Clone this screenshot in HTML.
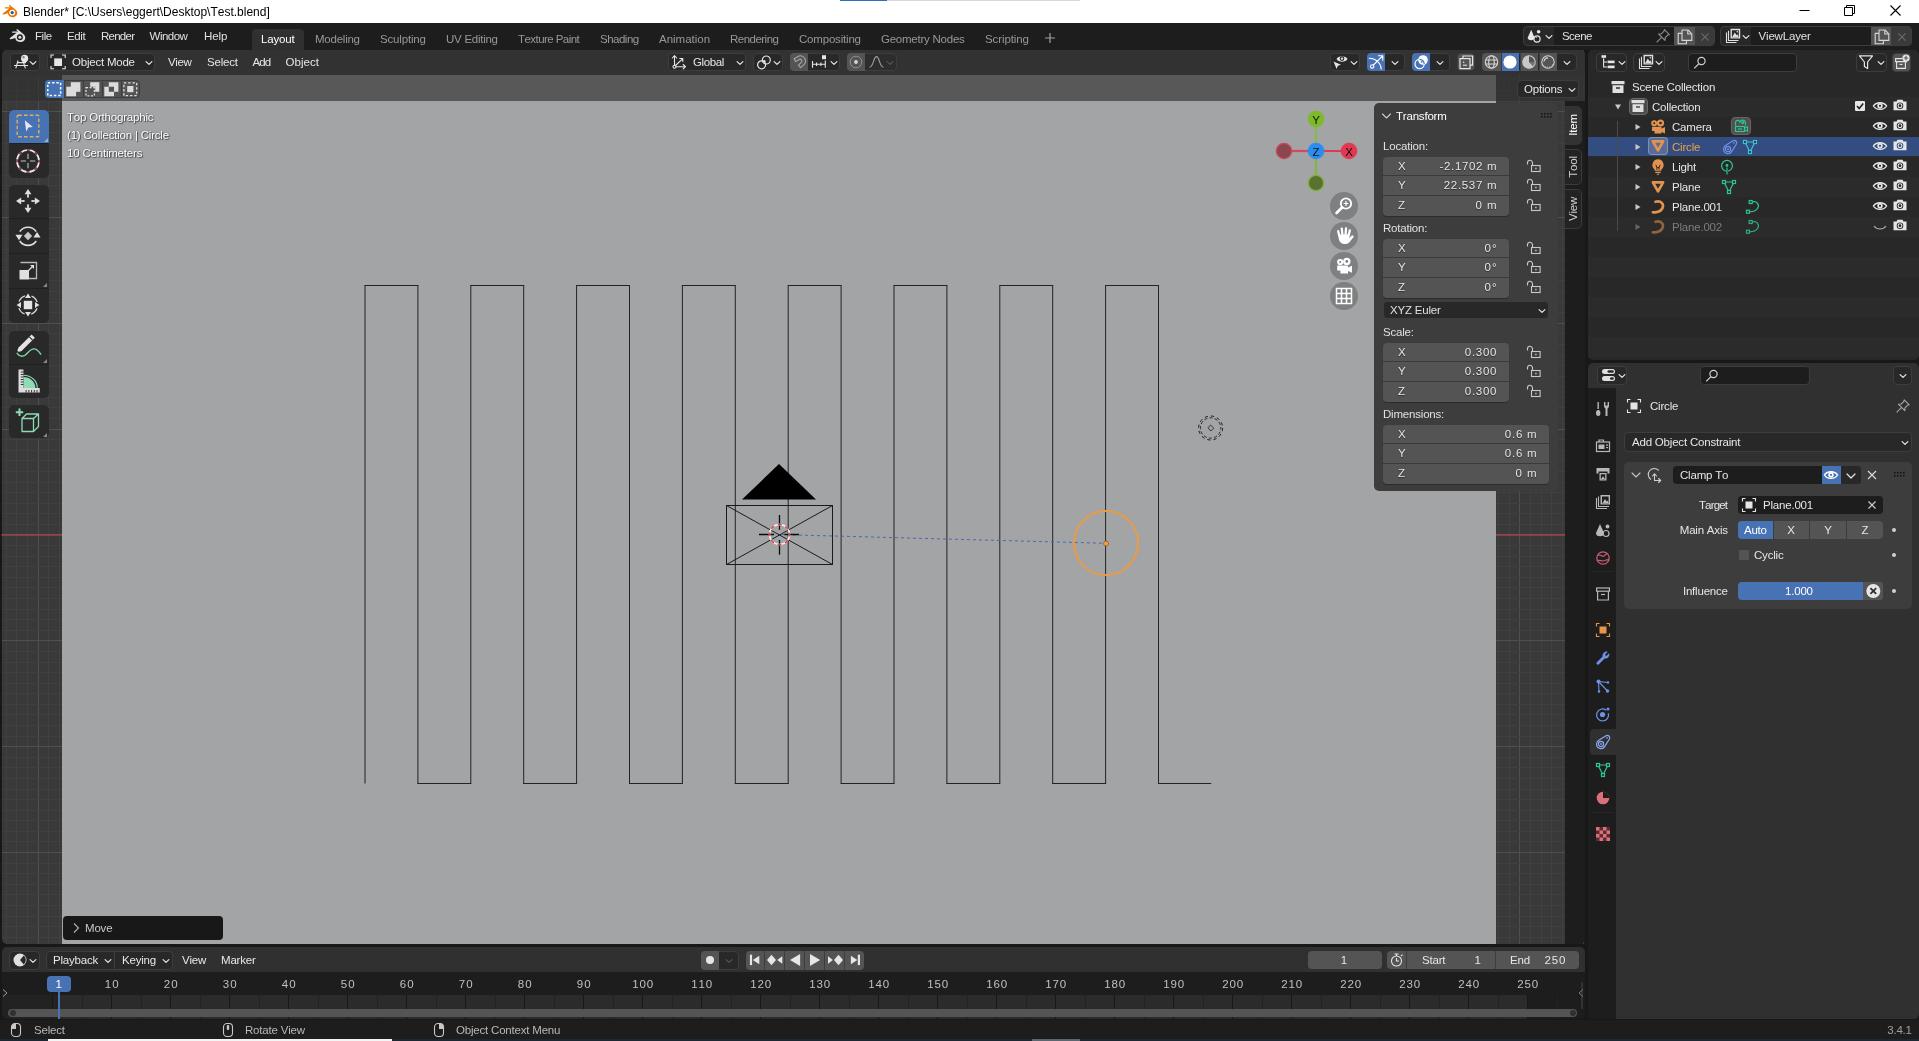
<!DOCTYPE html>
<html><head><meta charset="utf-8"><title>Blender</title>
<style>
html,body{margin:0;padding:0;}
body{width:1919px;height:1041px;overflow:hidden;background:#181818;position:relative;font-family:"Liberation Sans",sans-serif;}
.a{position:absolute;box-sizing:border-box;}
.t{white-space:nowrap;font-kerning:none;}
svg{overflow:visible;}
</style></head><body>
<div id="root" class="a" style="left:0;top:0;width:1919px;height:1041px;will-change:transform;">
<div class="a" style="left:0px;top:0px;width:1919px;height:23px;background:#ffffff;"></div>
<svg class="a" style="left:1.2px;top:3px;" width="17" height="16"><g transform="scale(0.85)"><path d="M2.2,12.3 L9.6,6.4 H5.2 C4.2,6.4 4.2,5 5.2,5 H11.2 L9.6,3.7 C8.8,3 9.8,1.9 10.7,2.6 L17.6,8.2 C19.4,9.8 19.7,12.4 18.4,14.4 C16.6,17 12.6,17.6 10,15.6 C8.9,14.7 8.2,13.5 8.2,12.2 L3.2,13.6 C2.2,14 1.4,13 2.2,12.3 Z" fill="#ea7600"/><circle cx="13.2" cy="11.3" r="3.4" fill="#fff"/><circle cx="13.2" cy="11.3" r="1.9" fill="#265787"/></g></svg>
<div class="a t" style="top:3.5px;line-height:16px;font-size:12px;letter-spacing:0px;color:#000;left:23px;">Blender* [C:\Users\eggert\Desktop\Test.blend]</div>
<div class="a" style="left:840px;top:0px;width:47px;height:1px;background:#2a6fc0;"></div>
<div class="a" style="left:887px;top:0px;width:193px;height:1px;background:#d8d8d8;"></div>
<svg class="a" style="left:1799px;top:4px;" width="12" height="12"><path d="M0.5,6.5 H10.5" stroke="#000" stroke-width="1"/></svg>
<svg class="a" style="left:1844px;top:5px;" width="12" height="12"><path d="M0.5,2.5 H8.5 V10.5 H0.5 Z M2.5,2.5 V0.5 H10.5 V8.5 H8.5" fill="none" stroke="#000" stroke-width="1"/></svg>
<svg class="a" style="left:1890px;top:5px;" width="12" height="12"><path d="M0.5,0.5 L10.5,10.5 M10.5,0.5 L0.5,10.5" stroke="#000" stroke-width="1.1"/></svg>
<div class="a" style="left:0px;top:23px;width:1919px;height:27px;background:#1d1d1d;"></div>
<svg class="a" style="left:8.3px;top:27px;" width="20" height="18"><g transform="translate(0,0) scale(0.9)"><path d="M2.2,12.3 L9.6,6.4 H5.2 C4.2,6.4 4.2,5 5.2,5 H11.2 L9.6,3.7 C8.8,3 9.8,1.9 10.7,2.6 L17.6,8.2 C19.4,9.8 19.7,12.4 18.4,14.4 C16.6,17 12.6,17.6 10,15.6 C8.9,14.7 8.2,13.5 8.2,12.2 L3.2,13.6 C2.2,14 1.4,13 2.2,12.3 Z" fill="#e0e0e0"/><circle cx="13.2" cy="11.3" r="3.3" fill="#1d1d1d"/><circle cx="13.2" cy="11.3" r="1.7" fill="#e0e0e0"/></g></svg>
<div class="a t" style="top:28.0px;line-height:16px;font-size:11.5px;letter-spacing:-0.443px;color:#e0e0e0;left:35px;">File</div>
<div class="a t" style="top:28.0px;line-height:16px;font-size:11.5px;letter-spacing:-0.405px;color:#e0e0e0;left:67px;">Edit</div>
<div class="a t" style="top:28.0px;line-height:16px;font-size:11.5px;letter-spacing:-0.744px;color:#e0e0e0;left:101px;">Render</div>
<div class="a t" style="top:28.0px;line-height:16px;font-size:11.5px;letter-spacing:-0.52px;color:#e0e0e0;left:149.6px;">Window</div>
<div class="a t" style="top:28.0px;line-height:16px;font-size:11.5px;letter-spacing:-0.117px;color:#e0e0e0;left:204px;">Help</div>
<div class="a" style="left:252px;top:29px;width:52px;height:21px;background:#303030;border-radius:4px;border-bottom-left-radius:0;border-bottom-right-radius:0;"></div>
<div class="a t" style="top:31.0px;line-height:16px;font-size:11.5px;letter-spacing:-0.146px;color:#ffffff;left:261px;">Layout</div>
<div class="a t" style="top:31.0px;line-height:16px;font-size:11.5px;letter-spacing:-0.238px;color:#989898;left:315px;">Modeling</div>
<div class="a t" style="top:31.0px;line-height:16px;font-size:11.5px;letter-spacing:-0.164px;color:#989898;left:380px;">Sculpting</div>
<div class="a t" style="top:31.0px;line-height:16px;font-size:11.5px;letter-spacing:-0.259px;color:#989898;left:446px;">UV Editing</div>
<div class="a t" style="top:31.0px;line-height:16px;font-size:11.5px;letter-spacing:-0.558px;color:#989898;left:518px;">Texture Paint</div>
<div class="a t" style="top:31.0px;line-height:16px;font-size:11.5px;letter-spacing:-0.501px;color:#989898;left:600px;">Shading</div>
<div class="a t" style="top:31.0px;line-height:16px;font-size:11.5px;letter-spacing:-0.005px;color:#989898;left:659px;">Animation</div>
<div class="a t" style="top:31.0px;line-height:16px;font-size:11.5px;letter-spacing:-0.52px;color:#989898;left:730px;">Rendering</div>
<div class="a t" style="top:31.0px;line-height:16px;font-size:11.5px;letter-spacing:-0.192px;color:#989898;left:799px;">Compositing</div>
<div class="a t" style="top:31.0px;line-height:16px;font-size:11.5px;letter-spacing:-0.24px;color:#989898;left:881px;">Geometry Nodes</div>
<div class="a t" style="top:31.0px;line-height:16px;font-size:11.5px;letter-spacing:-0.105px;color:#989898;left:985px;">Scripting</div>
<svg class="a" style="left:1043.6px;top:32.3px;" width="12" height="12"><path d="M6,1 V11 M1,6 H11" stroke="#a0a0a0" stroke-width="1.2"/></svg>
<div class="a" style="left:1523px;top:26px;width:192px;height:20px;background:#282828;border-radius:4px;border:1px solid #3d3d3d;"></div>
<div class="a" style="left:1554px;top:27px;width:120px;height:18px;background:#1d1d1d;"></div>
<div class="a" style="left:1674px;top:27px;width:21px;height:18px;background:#545454;"></div>
<div class="a" style="left:1695px;top:27px;width:19px;height:18px;background:#3a3a3a;border-radius:0 3px 3px 0;"></div>
<div class="a t" style="top:28.0px;line-height:16px;font-size:11.5px;letter-spacing:-0.552px;color:#e0e0e0;left:1562px;">Scene</div>
<div class="a" style="left:1720px;top:26px;width:192px;height:20px;background:#282828;border-radius:4px;border:1px solid #3d3d3d;"></div>
<div class="a" style="left:1751px;top:27px;width:120px;height:18px;background:#1d1d1d;"></div>
<div class="a" style="left:1871px;top:27px;width:20px;height:18px;background:#545454;"></div>
<div class="a" style="left:1891px;top:27px;width:20px;height:18px;background:#3a3a3a;border-radius:0 3px 3px 0;"></div>
<div class="a t" style="top:28.0px;line-height:16px;font-size:11.5px;letter-spacing:-0.174px;color:#e0e0e0;left:1758.5px;">ViewLayer</div>
<div class="a" style="left:1.5px;top:50px;width:1583.5px;height:894px;background:#393939;border-radius:5px;"></div>
<svg class="a" style="left:0px;top:0px;shape-rendering:crispEdges;stroke-width:1;fill:none;" width="1919" height="1041"><path d="M6.5,50 V944" stroke="#404040"/><path d="M16.5,50 V944" stroke="#404040"/><path d="M27.5,50 V944" stroke="#404040"/><path d="M38.5,50 V944" stroke="#4f4f4f"/><path d="M48.5,50 V944" stroke="#404040"/><path d="M59.5,50 V944" stroke="#404040"/><path d="M1498.5,50 V944" stroke="#404040"/><path d="M1509.5,50 V944" stroke="#404040"/><path d="M1519.5,50 V944" stroke="#4f4f4f"/><path d="M1530.5,50 V944" stroke="#404040"/><path d="M1541.5,50 V944" stroke="#404040"/><path d="M1551.5,50 V944" stroke="#404040"/><path d="M1562.5,50 V944" stroke="#404040"/><path d="M1572.5,50 V944" stroke="#404040"/><path d="M1583.5,50 V944" stroke="#404040"/><path d="M1.5,58.5 H1585" stroke="#404040"/><path d="M1.5,69.5 H1585" stroke="#404040"/><path d="M1.5,79.5 H1585" stroke="#404040"/><path d="M1.5,90.5 H1585" stroke="#404040"/><path d="M1.5,101.5 H1585" stroke="#404040"/><path d="M1.5,111.5 H1585" stroke="#4f4f4f"/><path d="M1.5,122.5 H1585" stroke="#404040"/><path d="M1.5,132.5 H1585" stroke="#404040"/><path d="M1.5,143.5 H1585" stroke="#404040"/><path d="M1.5,153.5 H1585" stroke="#404040"/><path d="M1.5,164.5 H1585" stroke="#404040"/><path d="M1.5,175.5 H1585" stroke="#404040"/><path d="M1.5,185.5 H1585" stroke="#404040"/><path d="M1.5,196.5 H1585" stroke="#404040"/><path d="M1.5,206.5 H1585" stroke="#404040"/><path d="M1.5,217.5 H1585" stroke="#4f4f4f"/><path d="M1.5,228.5 H1585" stroke="#404040"/><path d="M1.5,238.5 H1585" stroke="#404040"/><path d="M1.5,249.5 H1585" stroke="#404040"/><path d="M1.5,259.5 H1585" stroke="#404040"/><path d="M1.5,270.5 H1585" stroke="#404040"/><path d="M1.5,280.5 H1585" stroke="#404040"/><path d="M1.5,291.5 H1585" stroke="#404040"/><path d="M1.5,302.5 H1585" stroke="#404040"/><path d="M1.5,312.5 H1585" stroke="#404040"/><path d="M1.5,323.5 H1585" stroke="#4f4f4f"/><path d="M1.5,333.5 H1585" stroke="#404040"/><path d="M1.5,344.5 H1585" stroke="#404040"/><path d="M1.5,355.5 H1585" stroke="#404040"/><path d="M1.5,365.5 H1585" stroke="#404040"/><path d="M1.5,376.5 H1585" stroke="#404040"/><path d="M1.5,386.5 H1585" stroke="#404040"/><path d="M1.5,397.5 H1585" stroke="#404040"/><path d="M1.5,407.5 H1585" stroke="#404040"/><path d="M1.5,418.5 H1585" stroke="#404040"/><path d="M1.5,429.5 H1585" stroke="#4f4f4f"/><path d="M1.5,439.5 H1585" stroke="#404040"/><path d="M1.5,450.5 H1585" stroke="#404040"/><path d="M1.5,460.5 H1585" stroke="#404040"/><path d="M1.5,471.5 H1585" stroke="#404040"/><path d="M1.5,482.5 H1585" stroke="#404040"/><path d="M1.5,492.5 H1585" stroke="#404040"/><path d="M1.5,503.5 H1585" stroke="#404040"/><path d="M1.5,513.5 H1585" stroke="#404040"/><path d="M1.5,524.5 H1585" stroke="#404040"/><path d="M1.5,545.5 H1585" stroke="#404040"/><path d="M1.5,556.5 H1585" stroke="#404040"/><path d="M1.5,566.5 H1585" stroke="#404040"/><path d="M1.5,577.5 H1585" stroke="#404040"/><path d="M1.5,587.5 H1585" stroke="#404040"/><path d="M1.5,598.5 H1585" stroke="#404040"/><path d="M1.5,609.5 H1585" stroke="#404040"/><path d="M1.5,619.5 H1585" stroke="#404040"/><path d="M1.5,630.5 H1585" stroke="#404040"/><path d="M1.5,640.5 H1585" stroke="#4f4f4f"/><path d="M1.5,651.5 H1585" stroke="#404040"/><path d="M1.5,662.5 H1585" stroke="#404040"/><path d="M1.5,672.5 H1585" stroke="#404040"/><path d="M1.5,683.5 H1585" stroke="#404040"/><path d="M1.5,693.5 H1585" stroke="#404040"/><path d="M1.5,704.5 H1585" stroke="#404040"/><path d="M1.5,714.5 H1585" stroke="#404040"/><path d="M1.5,725.5 H1585" stroke="#404040"/><path d="M1.5,736.5 H1585" stroke="#404040"/><path d="M1.5,746.5 H1585" stroke="#4f4f4f"/><path d="M1.5,757.5 H1585" stroke="#404040"/><path d="M1.5,767.5 H1585" stroke="#404040"/><path d="M1.5,778.5 H1585" stroke="#404040"/><path d="M1.5,789.5 H1585" stroke="#404040"/><path d="M1.5,799.5 H1585" stroke="#404040"/><path d="M1.5,810.5 H1585" stroke="#404040"/><path d="M1.5,820.5 H1585" stroke="#404040"/><path d="M1.5,831.5 H1585" stroke="#404040"/><path d="M1.5,841.5 H1585" stroke="#404040"/><path d="M1.5,852.5 H1585" stroke="#4f4f4f"/><path d="M1.5,863.5 H1585" stroke="#404040"/><path d="M1.5,873.5 H1585" stroke="#404040"/><path d="M1.5,884.5 H1585" stroke="#404040"/><path d="M1.5,894.5 H1585" stroke="#404040"/><path d="M1.5,905.5 H1585" stroke="#404040"/><path d="M1.5,916.5 H1585" stroke="#404040"/><path d="M1.5,926.5 H1585" stroke="#404040"/><path d="M1.5,937.5 H1585" stroke="#404040"/><path d="M1.5,534.8 H1585" stroke="#93444f" stroke-width="1.7" shape-rendering="auto"/></svg>
<div class="a" style="left:62px;top:75px;width:1434px;height:869px;background:#a3a4a6;"></div>
<svg class="a" style="left:0px;top:0px;" width="1919" height="1041"><g fill="none" stroke="#222324" stroke-width="1"><path d="M365.00,285.5 V783.5"/><path d="M417.90,285.5 V783.5"/><path d="M470.80,285.5 V783.5"/><path d="M523.70,285.5 V783.5"/><path d="M576.60,285.5 V783.5"/><path d="M629.50,285.5 V783.5"/><path d="M682.40,285.5 V783.5"/><path d="M735.30,285.5 V783.5"/><path d="M788.20,285.5 V783.5"/><path d="M841.10,285.5 V783.5"/><path d="M894.00,285.5 V783.5"/><path d="M946.90,285.5 V783.5"/><path d="M999.80,285.5 V783.5"/><path d="M1052.70,285.5 V783.5"/><path d="M1105.60,285.5 V783.5"/><path d="M1158.50,285.5 V783.5"/><path d="M364.50,285.5 H418.40"/><path d="M417.40,783.5 H471.30"/><path d="M470.30,285.5 H524.20"/><path d="M523.20,783.5 H577.10"/><path d="M576.10,285.5 H630.00"/><path d="M629.00,783.5 H682.90"/><path d="M681.90,285.5 H735.80"/><path d="M734.80,783.5 H788.70"/><path d="M787.70,285.5 H841.60"/><path d="M840.60,783.5 H894.50"/><path d="M893.50,285.5 H947.40"/><path d="M946.40,783.5 H1000.30"/><path d="M999.30,285.5 H1053.20"/><path d="M1052.20,783.5 H1106.10"/><path d="M1105.10,285.5 H1159.00"/><path d="M1158.00,783.5 H1211.20"/></g></svg>
<svg class="a" style="left:0px;top:0px;" width="1919" height="1041"><g fill="none" stroke="#1a1a1a" stroke-width="1">
<rect x="726.5" y="505.5" width="106" height="59"/>
<path d="M726.5,505.5 L832.5,564.5 M832.5,505.5 L726.5,564.5"/>
</g>
<path d="M779,464 L816,499.5 H742 Z" fill="#000"/>
<path d="M781,534.6 L1106,543.3" stroke="#4a6aa8" stroke-width="1" stroke-dasharray="3,3" fill="none"/>
<g stroke="#0a0a0a" stroke-width="1.3" fill="none"><path d="M779.5,515 V529.8 M779.5,540 V554.8 M759,534.5 H774 M784.3,534.5 H799"/></g>
<circle cx="779.5" cy="534.5" r="10" fill="none" stroke="#f4f4f4" stroke-width="1.5"/>
<circle cx="779.5" cy="534.5" r="10" fill="none" stroke="#e0404a" stroke-width="1.5" stroke-dasharray="3.93,3.924" stroke-dashoffset="2"/>
<circle cx="1106" cy="543" r="32" fill="none" stroke="#eb9a45" stroke-width="2"/>
<circle cx="1106" cy="543.5" r="2.5" fill="#f0a040" stroke="#7a4a10" stroke-width="0.6"/>
<circle cx="1210.6" cy="428" r="12" fill="none" stroke="#1a1a1a" stroke-width="1" stroke-dasharray="3.2,3.08"/>
<circle cx="1210.6" cy="428" r="10.2" fill="none" stroke="#1a1a1a" stroke-width="0.9" stroke-dasharray="3.2,2.14" stroke-dashoffset="1.5"/>
<path d="M1210.6,425 L1213.8,428.2 L1210.8,431 L1208,427.8 Z" fill="none" stroke="#2a2a2a" stroke-width="0.9"/>
</svg>
<div class="a" style="left:1.5px;top:50px;width:1583.5px;height:25px;background:#323232;border-radius:5px 5px 0 0;"></div>
<div class="a" style="left:1.5px;top:75px;width:1583.5px;height:26px;background:rgba(48,48,48,0.66);"></div>
<div class="a" style="left:1565px;top:101px;width:20px;height:843px;background:#1d1d1d;border-radius:0 0 5px 0;"></div>
<div class="a" style="left:10px;top:53px;width:30px;height:18px;background:#282828;border-radius:4px;border:1px solid #3d3d3d;"></div>
<svg class="a" style="left:27px;top:57px;" width="12" height="12"><path d="M3.1,4.55 L6,7.45 L8.9,4.55" fill="none" stroke="#e6e6e6" stroke-width="1.2" stroke-linecap="round" stroke-linejoin="round"/></svg>
<div class="a" style="left:47px;top:53px;width:108px;height:18px;background:#282828;border-radius:4px;border:1px solid #3d3d3d;"></div>
<div class="a t" style="top:54.0px;line-height:16px;font-size:11.5px;letter-spacing:-0.22px;color:#e6e6e6;left:72px;">Object Mode</div>
<svg class="a" style="left:143px;top:57px;" width="12" height="12"><path d="M3.1,4.55 L6,7.45 L8.9,4.55" fill="none" stroke="#e6e6e6" stroke-width="1.2" stroke-linecap="round" stroke-linejoin="round"/></svg>
<div class="a t" style="top:54.0px;line-height:16px;font-size:11.5px;letter-spacing:-0.409px;color:#e6e6e6;left:168px;">View</div>
<div class="a t" style="top:54.0px;line-height:16px;font-size:11.5px;letter-spacing:-0.192px;color:#e6e6e6;left:207px;">Select</div>
<div class="a t" style="top:54.0px;line-height:16px;font-size:11.5px;letter-spacing:-0.981px;color:#e6e6e6;left:252.6px;">Add</div>
<div class="a t" style="top:54.0px;line-height:16px;font-size:11.5px;letter-spacing:0.033px;color:#e6e6e6;left:285.6px;">Object</div>
<div class="a" style="left:668px;top:53px;width:78px;height:18px;background:#282828;border-radius:4px;border:1px solid #3d3d3d;"></div>
<div class="a t" style="top:54.0px;line-height:16px;font-size:11.5px;letter-spacing:-0.368px;color:#e6e6e6;left:693px;">Global</div>
<svg class="a" style="left:734px;top:57px;" width="12" height="12"><path d="M3.1,4.55 L6,7.45 L8.9,4.55" fill="none" stroke="#e6e6e6" stroke-width="1.2" stroke-linecap="round" stroke-linejoin="round"/></svg>
<div class="a" style="left:753px;top:53px;width:30px;height:18px;background:#282828;border-radius:4px;border:1px solid #3d3d3d;"></div>
<svg class="a" style="left:771px;top:57px;" width="12" height="12"><path d="M3.1,4.55 L6,7.45 L8.9,4.55" fill="none" stroke="#e6e6e6" stroke-width="1.2" stroke-linecap="round" stroke-linejoin="round"/></svg>
<div class="a" style="left:790px;top:53px;width:50px;height:18px;background:#282828;border-radius:4px;border:1px solid #3d3d3d;"></div>
<div class="a" style="left:790px;top:53px;width:18px;height:18px;background:#545454;border-radius:4px 0 0 4px;"></div>
<svg class="a" style="left:828px;top:57px;" width="12" height="12"><path d="M3.1,4.55 L6,7.45 L8.9,4.55" fill="none" stroke="#e6e6e6" stroke-width="1.2" stroke-linecap="round" stroke-linejoin="round"/></svg>
<div class="a" style="left:847px;top:53px;width:50px;height:18px;background:#2d2d2d;border-radius:4px;border:1px solid #3d3d3d;"></div>
<div class="a" style="left:847px;top:53px;width:18px;height:18px;background:#545454;border-radius:4px 0 0 4px;"></div>
<svg class="a" style="left:884px;top:57px;" width="12" height="12"><path d="M3.1,4.55 L6,7.45 L8.9,4.55" fill="none" stroke="#555" stroke-width="1.2" stroke-linecap="round" stroke-linejoin="round"/></svg>
<div class="a" style="left:1330px;top:53px;width:30px;height:18px;background:#282828;border-radius:4px;border:1px solid #3d3d3d;"></div>
<svg class="a" style="left:1348px;top:57px;" width="12" height="12"><path d="M3.1,4.55 L6,7.45 L8.9,4.55" fill="none" stroke="#e6e6e6" stroke-width="1.2" stroke-linecap="round" stroke-linejoin="round"/></svg>
<div class="a" style="left:1367px;top:53px;width:38px;height:18px;background:#282828;border-radius:4px;border:1px solid #3d3d3d;"></div>
<div class="a" style="left:1367px;top:53px;width:18px;height:18px;background:#4772b3;border-radius:4px 0 0 4px;"></div>
<svg class="a" style="left:1389px;top:57px;" width="12" height="12"><path d="M3.1,4.55 L6,7.45 L8.9,4.55" fill="none" stroke="#e6e6e6" stroke-width="1.2" stroke-linecap="round" stroke-linejoin="round"/></svg>
<div class="a" style="left:1412px;top:53px;width:38px;height:18px;background:#282828;border-radius:4px;border:1px solid #3d3d3d;"></div>
<div class="a" style="left:1412px;top:53px;width:18px;height:18px;background:#4772b3;border-radius:4px 0 0 4px;"></div>
<svg class="a" style="left:1434px;top:57px;" width="12" height="12"><path d="M3.1,4.55 L6,7.45 L8.9,4.55" fill="none" stroke="#e6e6e6" stroke-width="1.2" stroke-linecap="round" stroke-linejoin="round"/></svg>
<div class="a" style="left:1457px;top:53px;width:18px;height:18px;background:#545454;border-radius:4px;border:1px solid #3d3d3d;"></div>
<div class="a" style="left:1482px;top:53px;width:95px;height:18px;background:#282828;border-radius:4px;border:1px solid #3d3d3d;"></div>
<div class="a" style="left:1482px;top:53px;width:19px;height:18px;background:#545454;border-radius:4px 0 0 4px;"></div>
<div class="a" style="left:1501px;top:53px;width:18px;height:18px;background:#4772b3;"></div>
<div class="a" style="left:1520px;top:53px;width:18px;height:18px;background:#545454;"></div>
<div class="a" style="left:1539px;top:53px;width:18px;height:18px;background:#545454;"></div>
<svg class="a" style="left:1561px;top:57px;" width="12" height="12"><path d="M3.1,4.55 L6,7.45 L8.9,4.55" fill="none" stroke="#e6e6e6" stroke-width="1.2" stroke-linecap="round" stroke-linejoin="round"/></svg>
<div class="a" style="left:1500.5px;top:53px;width:1px;height:18px;background:#3d3d3d;"></div>
<div class="a" style="left:1519.5px;top:53px;width:1px;height:18px;background:#3d3d3d;"></div>
<div class="a" style="left:1538.5px;top:53px;width:1px;height:18px;background:#3d3d3d;"></div>
<div class="a" style="left:1517px;top:80px;width:61.5px;height:18px;background:#282828;border-radius:4px;border:1px solid #3d3d3d;"></div>
<div class="a t" style="top:81.0px;line-height:16px;font-size:11.5px;letter-spacing:-0.189px;color:#e6e6e6;left:1524px;">Options</div>
<svg class="a" style="left:1566px;top:84px;" width="12" height="12"><path d="M3.1,4.55 L6,7.45 L8.9,4.55" fill="none" stroke="#e6e6e6" stroke-width="1.2" stroke-linecap="round" stroke-linejoin="round"/></svg>
<div class="a" style="left:45px;top:80px;width:95px;height:18px;background:#545454;border-radius:4px;border:1px solid #3d3d3d;"></div>
<div class="a" style="left:45px;top:80px;width:19px;height:18px;background:#4772b3;border-radius:4px 0 0 4px;"></div>
<div class="a" style="left:63.5px;top:80px;width:1px;height:18px;background:#3d3d3d;"></div>
<div class="a" style="left:82.5px;top:80px;width:1px;height:18px;background:#3d3d3d;"></div>
<div class="a" style="left:101.5px;top:80px;width:1px;height:18px;background:#3d3d3d;"></div>
<div class="a" style="left:120.5px;top:80px;width:1px;height:18px;background:#3d3d3d;"></div>
<div class="a" style="left:9px;top:110px;width:40px;height:68px;background:#292929;border-radius:5px;"></div>
<div class="a" style="left:9px;top:185px;width:40px;height:137.8px;background:#292929;border-radius:5px;"></div>
<div class="a" style="left:9px;top:330.5px;width:40px;height:67.10000000000002px;background:#292929;border-radius:5px;"></div>
<div class="a" style="left:9px;top:405.4px;width:40px;height:32.80000000000001px;background:#292929;border-radius:5px;"></div>
<div class="a" style="left:9px;top:110px;width:40px;height:33.4px;background:#4772b3;border-radius:5px 5px 0 0;"></div>
<div class="a" style="left:9px;top:143.2px;width:40px;height:0.9px;background:#202020;"></div>
<div class="a" style="left:9px;top:218px;width:40px;height:0.9px;background:#202020;"></div>
<div class="a" style="left:9px;top:253px;width:40px;height:0.9px;background:#202020;"></div>
<div class="a" style="left:9px;top:287.8px;width:40px;height:0.9px;background:#202020;"></div>
<div class="a" style="left:9px;top:363.6px;width:40px;height:0.9px;background:#202020;"></div>
<div class="a t" style="top:109.0px;line-height:16px;font-size:11.5px;letter-spacing:-0.2px;color:#ffffff;left:67px;text-shadow:1px 1px 1px rgba(0,0,0,0.55),0 0 2px rgba(0,0,0,0.35);">Top Orthographic</div>
<div class="a t" style="top:127.0px;line-height:16px;font-size:11.5px;letter-spacing:-0.2px;color:#ffffff;left:67px;text-shadow:1px 1px 1px rgba(0,0,0,0.55),0 0 2px rgba(0,0,0,0.35);">(1) Collection | Circle</div>
<div class="a t" style="top:145.0px;line-height:16px;font-size:11.5px;letter-spacing:-0.2px;color:#ffffff;left:67px;text-shadow:1px 1px 1px rgba(0,0,0,0.55),0 0 2px rgba(0,0,0,0.35);">10 Centimeters</div>
<div class="a" style="left:63px;top:915.5px;width:160px;height:24px;background:#181818;border-radius:4px;"></div>
<div class="a t" style="top:920.0px;line-height:16px;font-size:11.5px;letter-spacing:-0.2px;color:#c8c8c8;left:85px;">Move</div>
<svg class="a" style="left:71px;top:922px;" width="10" height="12"><path d="M3,1.5 L7.5,6 L3,10.5" fill="none" stroke="#b0b0b0" stroke-width="1.1"/></svg>
<svg class="a" style="left:0px;top:0px;" width="1919" height="1041">
<g stroke-width="2.2" fill="none"><path d="M1316,151 H1349" stroke="#e03a52"/><path d="M1284,151 H1316" stroke="#d6475c"/><path d="M1316,119 V151" stroke="#8ab84a"/><path d="M1316,151 V183" stroke="#85b540"/></g>
<circle cx="1284" cy="151" r="7.6" fill="#8c4650" stroke="#c9485b" stroke-width="1.4"/>
<circle cx="1316" cy="183" r="7.6" fill="#58732f" stroke="#7fae38" stroke-width="1.4"/>
<circle cx="1349" cy="151" r="8.3" fill="#e03a52"/>
<circle cx="1316" cy="119" r="8.3" fill="#7dba2a"/>
<circle cx="1316" cy="151" r="8.3" fill="#2b8cf2"/>
</svg>
<div class="a t" style="top:111.5px;line-height:16px;font-size:11.5px;letter-spacing:0px;color:#101010;left:1306.0px;width:20px;text-align:center;">Y</div>
<div class="a t" style="top:143.5px;line-height:16px;font-size:11.5px;letter-spacing:0px;color:#101010;left:1306.0px;width:20px;text-align:center;">Z</div>
<div class="a t" style="top:143.5px;line-height:16px;font-size:11.5px;letter-spacing:0px;color:#101010;left:1339.0px;width:20px;text-align:center;">X</div>
<div class="a" style="left:1330.2px;top:192.2px;width:27.6px;height:27.6px;background:#7f8081;border-radius:13.8px;"></div>
<div class="a" style="left:1330.2px;top:222.2px;width:27.6px;height:27.6px;background:#7f8081;border-radius:13.8px;"></div>
<div class="a" style="left:1330.2px;top:252.2px;width:27.6px;height:27.6px;background:#7f8081;border-radius:13.8px;"></div>
<div class="a" style="left:1330.2px;top:282.2px;width:27.6px;height:27.6px;background:#7f8081;border-radius:13.8px;"></div>
<div class="a" style="left:1374px;top:103px;width:184px;height:388px;background:#3d3d3d;border-radius:5px;"></div>
<svg class="a" style="left:1380px;top:110px;" width="12" height="12"><path d="M2.5,4 L6.5,8 L10.5,4" fill="none" stroke="#d0d0d0" stroke-width="1.1" stroke-linecap="round"/></svg>
<div class="a t" style="top:108.0px;line-height:16px;font-size:11.5px;letter-spacing:-0.2px;color:#ffffff;left:1396px;">Transform</div>
<svg class="a" style="left:1541px;top:113px;" width="12" height="6"><rect x="0" y="0" width="1.6" height="1.6" fill="#161616"/><rect x="0" y="3" width="1.6" height="1.6" fill="#161616"/><rect x="3" y="0" width="1.6" height="1.6" fill="#161616"/><rect x="3" y="3" width="1.6" height="1.6" fill="#161616"/><rect x="6" y="0" width="1.6" height="1.6" fill="#161616"/><rect x="6" y="3" width="1.6" height="1.6" fill="#161616"/><rect x="9" y="0" width="1.6" height="1.6" fill="#161616"/><rect x="9" y="3" width="1.6" height="1.6" fill="#161616"/></svg>
<div class="a t" style="top:138.0px;line-height:16px;font-size:11.5px;letter-spacing:-0.2px;color:#e0e0e0;left:1383px;">Location:</div>
<div class="a" style="left:1383px;top:157px;width:126px;height:58.5px;background:#545454;border-radius:4px;box-shadow:0 1px 1px rgba(0,0,0,0.3);"></div>
<div class="a t" style="top:157.7px;line-height:16px;font-size:11.5px;letter-spacing:-0.2px;color:#e6e6e6;left:1398px;text-shadow:0 1px 1px rgba(0,0,0,0.5);">X</div>
<div class="a t" style="top:157.7px;line-height:16px;font-size:11.5px;letter-spacing:0.647px;color:#e6e6e6;left:1397.147px;width:100px;text-align:right;text-shadow:0 1px 1px rgba(0,0,0,0.5);">-2.1702 m</div>
<svg class="a" style="left:1526px;top:157.2px;" width="16" height="16"><g fill="none" stroke="#c8c8c8" stroke-width="1.1"><path d="M1.5,7.5 V5.8 A2.5,2.5 0 0 1 6.5,5.8 V8.5"/><rect x="5.5" y="8.5" width="8.6" height="6"/><path d="M9.2,11.5 H10.6" stroke-width="1.4"/></g></svg>
<div class="a" style="left:1383px;top:175.2px;width:126px;height:1px;background:#3a3a3a;"></div>
<div class="a t" style="top:176.6px;line-height:16px;font-size:11.5px;letter-spacing:-0.2px;color:#e6e6e6;left:1398px;text-shadow:0 1px 1px rgba(0,0,0,0.5);">Y</div>
<div class="a t" style="top:176.6px;line-height:16px;font-size:11.5px;letter-spacing:0.685px;color:#e6e6e6;left:1397.185px;width:100px;text-align:right;text-shadow:0 1px 1px rgba(0,0,0,0.5);">22.537 m</div>
<svg class="a" style="left:1526px;top:176.1px;" width="16" height="16"><g fill="none" stroke="#c8c8c8" stroke-width="1.1"><path d="M1.5,7.5 V5.8 A2.5,2.5 0 0 1 6.5,5.8 V8.5"/><rect x="5.5" y="8.5" width="8.6" height="6"/><path d="M9.2,11.5 H10.6" stroke-width="1.4"/></g></svg>
<div class="a" style="left:1383px;top:195.3px;width:126px;height:1px;background:#3a3a3a;"></div>
<div class="a t" style="top:196.8px;line-height:16px;font-size:11.5px;letter-spacing:-0.2px;color:#e6e6e6;left:1398px;text-shadow:0 1px 1px rgba(0,0,0,0.5);">Z</div>
<div class="a t" style="top:196.8px;line-height:16px;font-size:11.5px;letter-spacing:0.959px;color:#e6e6e6;left:1397.459px;width:100px;text-align:right;text-shadow:0 1px 1px rgba(0,0,0,0.5);">0 m</div>
<svg class="a" style="left:1526px;top:196.3px;" width="16" height="16"><g fill="none" stroke="#c8c8c8" stroke-width="1.1"><path d="M1.5,7.5 V5.8 A2.5,2.5 0 0 1 6.5,5.8 V8.5"/><rect x="5.5" y="8.5" width="8.6" height="6"/><path d="M9.2,11.5 H10.6" stroke-width="1.4"/></g></svg>
<div class="a t" style="top:220.0px;line-height:16px;font-size:11.5px;letter-spacing:-0.2px;color:#e0e0e0;left:1383px;">Rotation:</div>
<div class="a" style="left:1383px;top:239px;width:126px;height:58.5px;background:#545454;border-radius:4px;box-shadow:0 1px 1px rgba(0,0,0,0.3);"></div>
<div class="a t" style="top:239.7px;line-height:16px;font-size:11.5px;letter-spacing:-0.2px;color:#e6e6e6;left:1398px;text-shadow:0 1px 1px rgba(0,0,0,0.5);">X</div>
<div class="a t" style="top:239.7px;line-height:16px;font-size:11.5px;letter-spacing:1.099px;color:#e6e6e6;left:1397.599px;width:100px;text-align:right;text-shadow:0 1px 1px rgba(0,0,0,0.5);">0°</div>
<svg class="a" style="left:1526px;top:239.2px;" width="16" height="16"><g fill="none" stroke="#c8c8c8" stroke-width="1.1"><path d="M1.5,7.5 V5.8 A2.5,2.5 0 0 1 6.5,5.8 V8.5"/><rect x="5.5" y="8.5" width="8.6" height="6"/><path d="M9.2,11.5 H10.6" stroke-width="1.4"/></g></svg>
<div class="a" style="left:1383px;top:257.2px;width:126px;height:1px;background:#3a3a3a;"></div>
<div class="a t" style="top:258.6px;line-height:16px;font-size:11.5px;letter-spacing:-0.2px;color:#e6e6e6;left:1398px;text-shadow:0 1px 1px rgba(0,0,0,0.5);">Y</div>
<div class="a t" style="top:258.6px;line-height:16px;font-size:11.5px;letter-spacing:1.099px;color:#e6e6e6;left:1397.599px;width:100px;text-align:right;text-shadow:0 1px 1px rgba(0,0,0,0.5);">0°</div>
<svg class="a" style="left:1526px;top:258.1px;" width="16" height="16"><g fill="none" stroke="#c8c8c8" stroke-width="1.1"><path d="M1.5,7.5 V5.8 A2.5,2.5 0 0 1 6.5,5.8 V8.5"/><rect x="5.5" y="8.5" width="8.6" height="6"/><path d="M9.2,11.5 H10.6" stroke-width="1.4"/></g></svg>
<div class="a" style="left:1383px;top:277.3px;width:126px;height:1px;background:#3a3a3a;"></div>
<div class="a t" style="top:278.8px;line-height:16px;font-size:11.5px;letter-spacing:-0.2px;color:#e6e6e6;left:1398px;text-shadow:0 1px 1px rgba(0,0,0,0.5);">Z</div>
<div class="a t" style="top:278.8px;line-height:16px;font-size:11.5px;letter-spacing:1.099px;color:#e6e6e6;left:1397.599px;width:100px;text-align:right;text-shadow:0 1px 1px rgba(0,0,0,0.5);">0°</div>
<svg class="a" style="left:1526px;top:278.3px;" width="16" height="16"><g fill="none" stroke="#c8c8c8" stroke-width="1.1"><path d="M1.5,7.5 V5.8 A2.5,2.5 0 0 1 6.5,5.8 V8.5"/><rect x="5.5" y="8.5" width="8.6" height="6"/><path d="M9.2,11.5 H10.6" stroke-width="1.4"/></g></svg>
<div class="a" style="left:1383px;top:301px;width:166px;height:18px;background:#282828;border-radius:4px;border:1px solid #3d3d3d;"></div>
<div class="a t" style="top:302.0px;line-height:16px;font-size:11.5px;letter-spacing:-0.2px;color:#e0e0e0;left:1390px;">XYZ Euler</div>
<svg class="a" style="left:1536px;top:305px;" width="12" height="12"><path d="M3.1,4.55 L6,7.45 L8.9,4.55" fill="none" stroke="#e6e6e6" stroke-width="1.2" stroke-linecap="round" stroke-linejoin="round"/></svg>
<div class="a t" style="top:324.0px;line-height:16px;font-size:11.5px;letter-spacing:-0.2px;color:#e0e0e0;left:1383px;">Scale:</div>
<div class="a" style="left:1383px;top:343px;width:126px;height:58.5px;background:#545454;border-radius:4px;box-shadow:0 1px 1px rgba(0,0,0,0.3);"></div>
<div class="a t" style="top:343.7px;line-height:16px;font-size:11.5px;letter-spacing:-0.2px;color:#e6e6e6;left:1398px;text-shadow:0 1px 1px rgba(0,0,0,0.5);">X</div>
<div class="a t" style="top:343.7px;line-height:16px;font-size:11.5px;letter-spacing:0.719px;color:#e6e6e6;left:1397.219px;width:100px;text-align:right;text-shadow:0 1px 1px rgba(0,0,0,0.5);">0.300</div>
<svg class="a" style="left:1526px;top:343.2px;" width="16" height="16"><g fill="none" stroke="#c8c8c8" stroke-width="1.1"><path d="M1.5,7.5 V5.8 A2.5,2.5 0 0 1 6.5,5.8 V8.5"/><rect x="5.5" y="8.5" width="8.6" height="6"/><path d="M9.2,11.5 H10.6" stroke-width="1.4"/></g></svg>
<div class="a" style="left:1383px;top:361.2px;width:126px;height:1px;background:#3a3a3a;"></div>
<div class="a t" style="top:362.6px;line-height:16px;font-size:11.5px;letter-spacing:-0.2px;color:#e6e6e6;left:1398px;text-shadow:0 1px 1px rgba(0,0,0,0.5);">Y</div>
<div class="a t" style="top:362.6px;line-height:16px;font-size:11.5px;letter-spacing:0.719px;color:#e6e6e6;left:1397.219px;width:100px;text-align:right;text-shadow:0 1px 1px rgba(0,0,0,0.5);">0.300</div>
<svg class="a" style="left:1526px;top:362.1px;" width="16" height="16"><g fill="none" stroke="#c8c8c8" stroke-width="1.1"><path d="M1.5,7.5 V5.8 A2.5,2.5 0 0 1 6.5,5.8 V8.5"/><rect x="5.5" y="8.5" width="8.6" height="6"/><path d="M9.2,11.5 H10.6" stroke-width="1.4"/></g></svg>
<div class="a" style="left:1383px;top:381.3px;width:126px;height:1px;background:#3a3a3a;"></div>
<div class="a t" style="top:382.8px;line-height:16px;font-size:11.5px;letter-spacing:-0.2px;color:#e6e6e6;left:1398px;text-shadow:0 1px 1px rgba(0,0,0,0.5);">Z</div>
<div class="a t" style="top:382.8px;line-height:16px;font-size:11.5px;letter-spacing:0.719px;color:#e6e6e6;left:1397.219px;width:100px;text-align:right;text-shadow:0 1px 1px rgba(0,0,0,0.5);">0.300</div>
<svg class="a" style="left:1526px;top:382.3px;" width="16" height="16"><g fill="none" stroke="#c8c8c8" stroke-width="1.1"><path d="M1.5,7.5 V5.8 A2.5,2.5 0 0 1 6.5,5.8 V8.5"/><rect x="5.5" y="8.5" width="8.6" height="6"/><path d="M9.2,11.5 H10.6" stroke-width="1.4"/></g></svg>
<div class="a t" style="top:406.0px;line-height:16px;font-size:11.5px;letter-spacing:-0.2px;color:#e0e0e0;left:1383px;">Dimensions:</div>
<div class="a" style="left:1383px;top:425px;width:166px;height:58.5px;background:#545454;border-radius:4px;box-shadow:0 1px 1px rgba(0,0,0,0.3);"></div>
<div class="a t" style="top:425.7px;line-height:16px;font-size:11.5px;letter-spacing:-0.2px;color:#e6e6e6;left:1398px;text-shadow:0 1px 1px rgba(0,0,0,0.5);">X</div>
<div class="a t" style="top:425.7px;line-height:16px;font-size:11.5px;letter-spacing:0.719px;color:#e6e6e6;left:1437.219px;width:100px;text-align:right;text-shadow:0 1px 1px rgba(0,0,0,0.5);">0.6 m</div>
<div class="a" style="left:1383px;top:443.2px;width:166px;height:1px;background:#3a3a3a;"></div>
<div class="a t" style="top:444.6px;line-height:16px;font-size:11.5px;letter-spacing:-0.2px;color:#e6e6e6;left:1398px;text-shadow:0 1px 1px rgba(0,0,0,0.5);">Y</div>
<div class="a t" style="top:444.6px;line-height:16px;font-size:11.5px;letter-spacing:0.719px;color:#e6e6e6;left:1437.219px;width:100px;text-align:right;text-shadow:0 1px 1px rgba(0,0,0,0.5);">0.6 m</div>
<div class="a" style="left:1383px;top:463.3px;width:166px;height:1px;background:#3a3a3a;"></div>
<div class="a t" style="top:464.8px;line-height:16px;font-size:11.5px;letter-spacing:-0.2px;color:#e6e6e6;left:1398px;text-shadow:0 1px 1px rgba(0,0,0,0.5);">Z</div>
<div class="a t" style="top:464.8px;line-height:16px;font-size:11.5px;letter-spacing:0.959px;color:#e6e6e6;left:1437.459px;width:100px;text-align:right;text-shadow:0 1px 1px rgba(0,0,0,0.5);">0 m</div>
<div class="a" style="left:1565px;top:106px;width:17px;height:39px;background:#333333;border-radius:0 5px 5px 0;"></div>
<div class="a" style="left:1565px;top:149px;width:17px;height:35.5px;background:#232323;border-radius:0 5px 5px 0;border:1px solid #3a3a3a;border-left:none;"></div>
<div class="a" style="left:1565px;top:189px;width:17px;height:39.8px;background:#232323;border-radius:0 5px 5px 0;border:1px solid #3a3a3a;border-left:none;"></div>
<div class="a t" style="left:1543px;top:117px;width:60px;height:16px;line-height:16px;text-align:center;font-size:11.5px;letter-spacing:-0.2px;color:#ffffff;transform:rotate(-90deg);">Item</div>
<div class="a t" style="left:1543px;top:158.5px;width:60px;height:16px;line-height:16px;text-align:center;font-size:11.5px;letter-spacing:-0.2px;color:#d0d0d0;transform:rotate(-90deg);">Tool</div>
<div class="a t" style="left:1543px;top:200.5px;width:60px;height:16px;line-height:16px;text-align:center;font-size:11.5px;letter-spacing:-0.2px;color:#d0d0d0;transform:rotate(-90deg);">View</div>
<div class="a" style="left:1588px;top:50px;width:331px;height:310px;background:#282828;border-radius:5px;overflow:hidden;"></div>
<div class="a" style="left:1588px;top:50px;width:331px;height:27px;background:#282828;border-radius:5px 5px 0 0;"></div>
<div class="a" style="left:1588px;top:97px;width:331px;height:20px;background:#2b2b2b;"></div>
<div class="a" style="left:1588px;top:137px;width:331px;height:20px;background:#2b2b2b;"></div>
<div class="a" style="left:1588px;top:177px;width:331px;height:20px;background:#2b2b2b;"></div>
<div class="a" style="left:1588px;top:217px;width:331px;height:20px;background:#2b2b2b;"></div>
<div class="a" style="left:1588px;top:257px;width:331px;height:20px;background:#2b2b2b;"></div>
<div class="a" style="left:1588px;top:297px;width:331px;height:20px;background:#2b2b2b;"></div>
<div class="a" style="left:1588px;top:337px;width:331px;height:20px;background:#2b2b2b;"></div>
<div class="a" style="left:1588px;top:136.6px;width:331px;height:19.8px;background:#334d80;"></div>
<div class="a" style="left:1596px;top:53px;width:31px;height:19px;background:#282828;border-radius:4px;border:1px solid #3d3d3d;"></div>
<svg class="a" style="left:1616px;top:57px;" width="12" height="12"><path d="M3.1,4.55 L6,7.45 L8.9,4.55" fill="none" stroke="#e6e6e6" stroke-width="1.2" stroke-linecap="round" stroke-linejoin="round"/></svg>
<div class="a" style="left:1633px;top:53px;width:32px;height:19px;background:#282828;border-radius:4px;border:1px solid #3d3d3d;"></div>
<svg class="a" style="left:1653px;top:57px;" width="12" height="12"><path d="M3.1,4.55 L6,7.45 L8.9,4.55" fill="none" stroke="#e6e6e6" stroke-width="1.2" stroke-linecap="round" stroke-linejoin="round"/></svg>
<div class="a" style="left:1688px;top:53px;width:109px;height:19px;background:#1d1d1d;border-radius:4px;border:1px solid #3d3d3d;"></div>
<svg class="a" style="left:1692px;top:55px;" width="16" height="16"><circle cx="9.5" cy="6" r="3.6" fill="none" stroke="#d0d0d0" stroke-width="1.2"/><path d="M7,8.6 L2.2,13.4" stroke="#d0d0d0" stroke-width="1.3"/></svg>
<div class="a" style="left:1856px;top:53px;width:31px;height:19px;background:#282828;border-radius:4px;border:1px solid #3d3d3d;"></div>
<svg class="a" style="left:1875px;top:57px;" width="12" height="12"><path d="M3.1,4.55 L6,7.45 L8.9,4.55" fill="none" stroke="#e6e6e6" stroke-width="1.2" stroke-linecap="round" stroke-linejoin="round"/></svg>
<div class="a" style="left:1892px;top:53px;width:19px;height:19px;background:#545454;border-radius:4px;border:1px solid #3d3d3d;"></div>
<div class="a" style="left:1617px;top:121px;width:1px;height:110px;background:#4a4a4a;"></div>
<svg class="a" style="left:1610px;top:79px;" width="16" height="16"><path d="M1.5,2 H14.5 V5.2 H1.5 Z" fill="#e0e0e0"/><path d="M2.5,6.2 H13.5 V14 H2.5 Z M6,8.2 V9.8 H10 V8.2 Z" fill="#e0e0e0" fill-rule="evenodd"/></svg>
<div class="a t" style="top:79.0px;line-height:16px;font-size:11.5px;letter-spacing:-0.2px;color:#e6e6e6;left:1632px;">Scene Collection</div>
<svg class="a" style="left:1613.5px;top:103px;" width="8" height="8"><path d="M1,1.5 L7,1.5 L4,6.5 Z" fill="#c8c8c8"/></svg>
<div class="a" style="left:1628.5px;top:97.5px;width:19.5px;height:17.5px;background:#4a4a4a;border-radius:4px;border:1px solid #6a6a6a;"></div>
<svg class="a" style="left:1630.3px;top:98.3px;" width="16" height="16"><path d="M1.5,2 H14.5 V5.2 H1.5 Z" fill="#e0e0e0"/><path d="M2.5,6.2 H13.5 V14 H2.5 Z M6,8.2 V9.8 H10 V8.2 Z" fill="#e0e0e0" fill-rule="evenodd"/></svg>
<div class="a t" style="top:99.0px;line-height:16px;font-size:11.5px;letter-spacing:-0.2px;color:#e6e6e6;left:1652px;">Collection</div>
<div class="a" style="left:1855px;top:101.2px;width:10px;height:9.6px;background:#e6e6e6;border-radius:1px;"></div>
<svg class="a" style="left:1855px;top:101px;" width="10" height="10"><path d="M2,5 L4.2,7.5 L8.2,2.5" fill="none" stroke="#1d1d1d" stroke-width="1.5"/></svg>
<svg class="a" style="left:1633.5px;top:123px;" width="8" height="8"><path d="M1.5,1 L6.5,4 L1.5,7 Z" fill="#c8c8c8"/></svg>
<div class="a t" style="top:119.0px;line-height:16px;font-size:11.5px;letter-spacing:-0.2px;color:#e6e6e6;left:1672px;">Camera</div>
<svg class="a" style="left:1871.5px;top:117.6px;" width="16" height="16"><path d="M1.4,8 C4,3.6 12,3.6 14.6,8 C12,12.4 4,12.4 1.4,8 Z" fill="none" stroke="#e6e6e6" stroke-width="1.4"/><circle cx="8" cy="7.8" r="2.7" fill="#e6e6e6"/><circle cx="8" cy="7.8" r="1.1" fill="#282828"/></svg>
<svg class="a" style="left:1891.5px;top:117.4px;" width="16" height="16"><path d="M1.5,4.6 H4.6 L5.4,2.8 H10.6 L11.4,4.6 H14.5 V13.2 H1.5 Z" fill="#e6e6e6"/><circle cx="8" cy="8.7" r="3.3" fill="#282828"/><circle cx="8" cy="8.7" r="1.9" fill="none" stroke="#e6e6e6" stroke-width="1.1"/></svg>
<svg class="a" style="left:1633.5px;top:143px;" width="8" height="8"><path d="M1.5,1 L6.5,4 L1.5,7 Z" fill="#c8c8c8"/></svg>
<div class="a t" style="top:139.0px;line-height:16px;font-size:11.5px;letter-spacing:-0.2px;color:#f0a040;left:1672px;">Circle</div>
<svg class="a" style="left:1871.5px;top:137.6px;" width="16" height="16"><path d="M1.4,8 C4,3.6 12,3.6 14.6,8 C12,12.4 4,12.4 1.4,8 Z" fill="none" stroke="#e6e6e6" stroke-width="1.4"/><circle cx="8" cy="7.8" r="2.7" fill="#e6e6e6"/><circle cx="8" cy="7.8" r="1.1" fill="#334d80"/></svg>
<svg class="a" style="left:1891.5px;top:137.4px;" width="16" height="16"><path d="M1.5,4.6 H4.6 L5.4,2.8 H10.6 L11.4,4.6 H14.5 V13.2 H1.5 Z" fill="#e6e6e6"/><circle cx="8" cy="8.7" r="3.3" fill="#334d80"/><circle cx="8" cy="8.7" r="1.9" fill="none" stroke="#e6e6e6" stroke-width="1.1"/></svg>
<svg class="a" style="left:1633.5px;top:163px;" width="8" height="8"><path d="M1.5,1 L6.5,4 L1.5,7 Z" fill="#c8c8c8"/></svg>
<div class="a t" style="top:159.0px;line-height:16px;font-size:11.5px;letter-spacing:-0.2px;color:#e6e6e6;left:1672px;">Light</div>
<svg class="a" style="left:1871.5px;top:157.6px;" width="16" height="16"><path d="M1.4,8 C4,3.6 12,3.6 14.6,8 C12,12.4 4,12.4 1.4,8 Z" fill="none" stroke="#e6e6e6" stroke-width="1.4"/><circle cx="8" cy="7.8" r="2.7" fill="#e6e6e6"/><circle cx="8" cy="7.8" r="1.1" fill="#282828"/></svg>
<svg class="a" style="left:1891.5px;top:157.4px;" width="16" height="16"><path d="M1.5,4.6 H4.6 L5.4,2.8 H10.6 L11.4,4.6 H14.5 V13.2 H1.5 Z" fill="#e6e6e6"/><circle cx="8" cy="8.7" r="3.3" fill="#282828"/><circle cx="8" cy="8.7" r="1.9" fill="none" stroke="#e6e6e6" stroke-width="1.1"/></svg>
<svg class="a" style="left:1633.5px;top:183px;" width="8" height="8"><path d="M1.5,1 L6.5,4 L1.5,7 Z" fill="#c8c8c8"/></svg>
<div class="a t" style="top:179.0px;line-height:16px;font-size:11.5px;letter-spacing:-0.2px;color:#e6e6e6;left:1672px;">Plane</div>
<svg class="a" style="left:1871.5px;top:177.6px;" width="16" height="16"><path d="M1.4,8 C4,3.6 12,3.6 14.6,8 C12,12.4 4,12.4 1.4,8 Z" fill="none" stroke="#e6e6e6" stroke-width="1.4"/><circle cx="8" cy="7.8" r="2.7" fill="#e6e6e6"/><circle cx="8" cy="7.8" r="1.1" fill="#282828"/></svg>
<svg class="a" style="left:1891.5px;top:177.4px;" width="16" height="16"><path d="M1.5,4.6 H4.6 L5.4,2.8 H10.6 L11.4,4.6 H14.5 V13.2 H1.5 Z" fill="#e6e6e6"/><circle cx="8" cy="8.7" r="3.3" fill="#282828"/><circle cx="8" cy="8.7" r="1.9" fill="none" stroke="#e6e6e6" stroke-width="1.1"/></svg>
<svg class="a" style="left:1633.5px;top:203px;" width="8" height="8"><path d="M1.5,1 L6.5,4 L1.5,7 Z" fill="#c8c8c8"/></svg>
<div class="a t" style="top:199.0px;line-height:16px;font-size:11.5px;letter-spacing:-0.2px;color:#e6e6e6;left:1672px;">Plane.001</div>
<svg class="a" style="left:1871.5px;top:197.6px;" width="16" height="16"><path d="M1.4,8 C4,3.6 12,3.6 14.6,8 C12,12.4 4,12.4 1.4,8 Z" fill="none" stroke="#e6e6e6" stroke-width="1.4"/><circle cx="8" cy="7.8" r="2.7" fill="#e6e6e6"/><circle cx="8" cy="7.8" r="1.1" fill="#282828"/></svg>
<svg class="a" style="left:1891.5px;top:197.4px;" width="16" height="16"><path d="M1.5,4.6 H4.6 L5.4,2.8 H10.6 L11.4,4.6 H14.5 V13.2 H1.5 Z" fill="#e6e6e6"/><circle cx="8" cy="8.7" r="3.3" fill="#282828"/><circle cx="8" cy="8.7" r="1.9" fill="none" stroke="#e6e6e6" stroke-width="1.1"/></svg>
<svg class="a" style="left:1633.5px;top:223px;" width="8" height="8"><path d="M1.5,1 L6.5,4 L1.5,7 Z" fill="#666"/></svg>
<div class="a t" style="top:219.0px;line-height:16px;font-size:11.5px;letter-spacing:-0.2px;color:#7c7c7c;left:1672px;">Plane.002</div>
<svg class="a" style="left:1871.5px;top:217.6px;" width="16" height="16"><path d="M2,8 C5,12 11,12 14,8" fill="none" stroke="#b0b0b0" stroke-width="1.1"/></svg>
<svg class="a" style="left:1891.5px;top:217.4px;" width="16" height="16"><path d="M1.5,4.6 H4.6 L5.4,2.8 H10.6 L11.4,4.6 H14.5 V13.2 H1.5 Z" fill="#e6e6e6"/><circle cx="8" cy="8.7" r="3.3" fill="#282828"/><circle cx="8" cy="8.7" r="1.9" fill="none" stroke="#e6e6e6" stroke-width="1.1"/></svg>
<svg class="a" style="left:1871.5px;top:97.6px;" width="16" height="16"><path d="M1.4,8 C4,3.6 12,3.6 14.6,8 C12,12.4 4,12.4 1.4,8 Z" fill="none" stroke="#e6e6e6" stroke-width="1.4"/><circle cx="8" cy="7.8" r="2.7" fill="#e6e6e6"/><circle cx="8" cy="7.8" r="1.1" fill="#282828"/></svg>
<svg class="a" style="left:1891.5px;top:97.4px;" width="16" height="16"><path d="M1.5,4.6 H4.6 L5.4,2.8 H10.6 L11.4,4.6 H14.5 V13.2 H1.5 Z" fill="#e6e6e6"/><circle cx="8" cy="8.7" r="3.3" fill="#282828"/><circle cx="8" cy="8.7" r="1.9" fill="none" stroke="#e6e6e6" stroke-width="1.1"/></svg>
<svg class="a" style="left:1650px;top:119px;" width="16" height="16"><circle cx="4.2" cy="4.3" r="3" fill="#e2934f"/><circle cx="10.5" cy="4" r="3.6" fill="#e2934f"/><path d="M2,7.8 H11.5 V9.5 L15,8 V14.5 L11.5,13 V14.5 H4.5 V12 H2 Z" fill="#e2934f"/><circle cx="4.2" cy="4.3" r="1" fill="#282828"/><circle cx="10.5" cy="4" r="1.3" fill="#282828"/></svg>
<div class="a" style="left:1731px;top:117px;width:20px;height:18px;background:#4f4f4f;border-radius:4px;border:1px solid #666;"></div>
<svg class="a" style="left:1733px;top:118.2px;" width="16" height="16"><g fill="none" stroke="#2fc590" stroke-width="1.2"><path d="M2.5,7.5 V4.5 A2.2,2.2 0 0 1 6.8,4 A3,3 0 0 1 12.5,4.5 V7.5"/><circle cx="9.7" cy="4.6" r="1"/><rect x="2.5" y="8.5" width="9" height="5"/><path d="M11.5,10 L14.5,8.8 V13.2 L11.5,12"/><path d="M5,11 H9"/></g></svg>
<div class="a" style="left:1648px;top:137px;width:20px;height:18.2px;background:rgba(255,255,255,0.18);border-radius:4px;border:1px solid rgba(255,255,255,0.25);"></div>
<svg class="a" style="left:1650px;top:138.4px;" width="16" height="16"><path d="M2.9,3.3 H13.1 L8,12.4 Z" fill="none" stroke="#e2934f" stroke-width="2.7" stroke-linejoin="round"/></svg>
<svg class="a" style="left:1722px;top:138.5px;" width="16" height="16"><g fill="none" stroke="#6d92e6" stroke-width="1.2"><path d="M1.6,10 A4.4,4.4 0 0 0 9.8,12.4 L14.4,5 A2.4,2.4 0 0 0 11.4,1.6 L3.8,6.2 A4.4,4.4 0 0 0 1.6,10 Z"/><circle cx="6" cy="10" r="2.6"/><circle cx="6" cy="10" r="0.9" fill="#6d92e6" stroke="none"/><circle cx="12" cy="3.9" r="0.8" fill="#6d92e6" stroke="none"/></g></svg>
<svg class="a" style="left:1742px;top:139px;" width="16" height="16"><g fill="none" stroke="#3bc4d0" stroke-width="1.2"><path d="M3,3 H13 L8,13 Z"/><rect x="1.5" y="1.5" width="3" height="3" fill="#282828"/><rect x="11.5" y="1.5" width="3" height="3" fill="#282828"/><rect x="6.5" y="11.5" width="3" height="3" fill="#282828"/></g></svg>
<svg class="a" style="left:1650px;top:159px;" width="16" height="16"><g transform="translate(8,8) scale(1.1) translate(-8,-8)"><path d="M8,1 A5.3,5.3 0 0 1 11,10.5 V11.5 H5 V10.5 A5.3,5.3 0 0 1 8,1 Z" fill="#e2934f"/><path d="M5.5,12.4 H10.5 V13.5 H5.5 Z M6.5,14.2 H9.5 L8,15.4 Z" fill="#e2934f"/><path d="M6,6 L7,8.5 H9 L10,6 M7,8.5 V10.5 M9,8.5 V10.5" stroke="#282828" stroke-width="0.9" fill="none"/></g></svg>
<svg class="a" style="left:1719px;top:159px;" width="16" height="16"><g fill="none" stroke="#2fc590" stroke-width="1.2"><circle cx="8" cy="6.8" r="5.4"/><circle cx="8" cy="6.5" r="0.8" fill="#2fc590"/><path d="M8,8.5 V11 M8,13 V15.5" /></g></svg>
<svg class="a" style="left:1650px;top:179px;" width="16" height="16"><path d="M2.9,3.3 H13.1 L8,12.4 Z" fill="none" stroke="#e2934f" stroke-width="2.7" stroke-linejoin="round"/></svg>
<svg class="a" style="left:1721px;top:179px;" width="16" height="16"><g fill="none" stroke="#2fc590" stroke-width="1.2"><path d="M3,3 H13 L8,13 Z"/><rect x="1.5" y="1.5" width="3" height="3" fill="#282828"/><rect x="11.5" y="1.5" width="3" height="3" fill="#282828"/><rect x="6.5" y="11.5" width="3" height="3" fill="#282828"/></g></svg>
<svg class="a" style="left:1650px;top:199px;" width="16" height="16"><path d="M5.5,2.8 C11,1 14.5,5.5 12.3,9.5 C10.5,12.8 6,13.8 2.8,13.2" fill="none" stroke="#e2934f" stroke-width="2.6" stroke-linecap="round" opacity="1"/></svg>
<svg class="a" style="left:1745px;top:198.5px;" width="16" height="16"><g fill="none" stroke="#2fc590" stroke-width="1.2" opacity="1"><path d="M7,3 C12,1.5 15,6 12.5,9.5 C11,11.8 8,12.8 4.5,12.8"/><rect x="4.2" y="1.5" width="3" height="3"/><rect x="1.5" y="11.2" width="3" height="3"/></g></svg>
<svg class="a" style="left:1650px;top:219px;" width="16" height="16"><path d="M5.5,2.8 C11,1 14.5,5.5 12.3,9.5 C10.5,12.8 6,13.8 2.8,13.2" fill="none" stroke="#e2934f" stroke-width="2.6" stroke-linecap="round" opacity="0.55"/></svg>
<svg class="a" style="left:1745px;top:218.5px;" width="16" height="16"><g fill="none" stroke="#2fc590" stroke-width="1.2" opacity="0.85"><path d="M7,3 C12,1.5 15,6 12.5,9.5 C11,11.8 8,12.8 4.5,12.8"/><rect x="4.2" y="1.5" width="3" height="3"/><rect x="1.5" y="11.2" width="3" height="3"/></g></svg>
<div class="a" style="left:1588px;top:363px;width:331px;height:656.3px;background:#303030;border-radius:5px;overflow:hidden;"></div>
<div class="a" style="left:1588px;top:388px;width:28px;height:631.3px;background:#1d1d1d;border-radius:0 0 0 5px;"></div>
<div class="a" style="left:1597px;top:366px;width:30px;height:19px;background:#282828;border-radius:4px;border:1px solid #3d3d3d;"></div>
<svg class="a" style="left:1616px;top:370px;" width="12" height="12"><path d="M3.1,4.55 L6,7.45 L8.9,4.55" fill="none" stroke="#e6e6e6" stroke-width="1.2" stroke-linecap="round" stroke-linejoin="round"/></svg>
<svg class="a" style="left:1601px;top:367px;" width="16" height="16"><rect x="1" y="2" width="13" height="5" rx="2.5" fill="#e0e0e0"/><rect x="6.5" y="3.2" width="6.3" height="2.6" rx="1.3" fill="#282828"/><rect x="1" y="9" width="13" height="5" rx="2.5" fill="#e0e0e0"/><rect x="9" y="10.2" width="3.8" height="2.6" rx="1.3" fill="#282828"/></svg>
<div class="a" style="left:1700px;top:366px;width:110px;height:19px;background:#1d1d1d;border-radius:4px;border:1px solid #3d3d3d;"></div>
<svg class="a" style="left:1704px;top:368px;" width="16" height="16"><circle cx="9.5" cy="6" r="3.6" fill="none" stroke="#d0d0d0" stroke-width="1.2"/><path d="M7,8.6 L2.2,13.4" stroke="#d0d0d0" stroke-width="1.3"/></svg>
<div class="a" style="left:1893px;top:366px;width:19px;height:19px;background:#282828;border-radius:4px;border:1px solid #3d3d3d;"></div>
<svg class="a" style="left:1896.5px;top:370px;" width="12" height="12"><path d="M3.1,4.55 L6,7.45 L8.9,4.55" fill="none" stroke="#e6e6e6" stroke-width="1.2" stroke-linecap="round" stroke-linejoin="round"/></svg>
<svg class="a" style="left:1626px;top:398px;" width="16" height="16"><rect x="4.5" y="4.5" width="7" height="7" fill="#e6e6e6"/><g fill="none" stroke="#e6e6e6" stroke-width="1.1"><path d="M1.5,4.5 V1.5 H4.5 M11.5,1.5 H14.5 V4.5 M14.5,11.5 V14.5 H11.5 M4.5,14.5 H1.5 V11.5"/></g></svg>
<div class="a t" style="top:398.0px;line-height:16px;font-size:11.5px;letter-spacing:-0.2px;color:#e6e6e6;left:1650px;">Circle</div>
<svg class="a" style="left:1895px;top:398px;" width="16" height="16"><g fill="none" stroke="#a8a8a8" stroke-width="1.1" stroke-linejoin="round"><path d="M9.2,1.8 L14.2,6.8 L12.6,7.2 L10,9.8 L9.8,12.6 L3.4,6.2 L6.2,6 L8.8,3.4 Z"/><path d="M6.4,9.6 L1.6,14.4"/></g></svg>
<div class="a" style="left:1624px;top:432px;width:288px;height:20px;background:#282828;border-radius:4px;border:1px solid #3d3d3d;"></div>
<div class="a t" style="top:434.0px;line-height:16px;font-size:11.5px;letter-spacing:-0.2px;color:#e6e6e6;left:1632px;">Add Object Constraint</div>
<svg class="a" style="left:1899px;top:437px;" width="12" height="12"><path d="M3.1,4.55 L6,7.45 L8.9,4.55" fill="none" stroke="#e6e6e6" stroke-width="1.2" stroke-linecap="round" stroke-linejoin="round"/></svg>
<div class="a" style="left:1624px;top:462px;width:288px;height:147px;background:#3d3d3d;border-radius:5px;"></div>
<svg class="a" style="left:1630px;top:469px;" width="12" height="12"><path d="M2,4 L6,8 L10,4" fill="none" stroke="#c8c8c8" stroke-width="1.1" stroke-linecap="round"/></svg>
<svg class="a" style="left:1646px;top:466px;" width="18" height="18"><g fill="none" stroke="#d0d0d0" stroke-width="1.1" stroke-linecap="round" stroke-linejoin="round"><path d="M12.5,4.2 A6,6 0 1 0 4.6,13.2"/><path d="M8.5,8 V14.5 H14.5"/><path d="M6.5,10 L8.5,7.8 L10.5,10"/><path d="M12.5,12.5 L14.7,14.5 L12.5,16.5"/></g></svg>
<div class="a" style="left:1673px;top:466px;width:188px;height:18px;background:#1d1d1d;border-radius:4px;"></div>
<div class="a" style="left:1821.5px;top:466px;width:19.5px;height:18px;background:#4772b3;"></div>
<div class="a" style="left:1841px;top:466px;width:20px;height:18px;background:#282828;border-radius:0 4px 4px 0;"></div>
<div class="a t" style="top:467.0px;line-height:16px;font-size:11.5px;letter-spacing:-0.2px;color:#e6e6e6;left:1680px;">Clamp To</div>
<svg class="a" style="left:1823.3px;top:466.8px;" width="16" height="16"><path d="M1.4,8 C4,3.6 12,3.6 14.6,8 C12,12.4 4,12.4 1.4,8 Z" fill="none" stroke="#ffffff" stroke-width="1.4"/><circle cx="8" cy="7.8" r="2.7" fill="#ffffff"/><circle cx="8" cy="7.8" r="1.1" fill="#4772b3"/></svg>
<svg class="a" style="left:1845px;top:470px;" width="12" height="12"><path d="M2,4.0 L6,8.0 L10,4.0" fill="none" stroke="#e6e6e6" stroke-width="1.2" stroke-linecap="round" stroke-linejoin="round"/></svg>
<svg class="a" style="left:1866px;top:469px;" width="12" height="12"><path d="M2,2 L10,10 M10,2 L2,10" stroke="#d8d8d8" stroke-width="1.2"/></svg>
<svg class="a" style="left:1894px;top:472px;" width="12" height="6"><rect x="0" y="0" width="1.6" height="1.6" fill="#161616"/><rect x="0" y="3" width="1.6" height="1.6" fill="#161616"/><rect x="3" y="0" width="1.6" height="1.6" fill="#161616"/><rect x="3" y="3" width="1.6" height="1.6" fill="#161616"/><rect x="6" y="0" width="1.6" height="1.6" fill="#161616"/><rect x="6" y="3" width="1.6" height="1.6" fill="#161616"/><rect x="9" y="0" width="1.6" height="1.6" fill="#161616"/><rect x="9" y="3" width="1.6" height="1.6" fill="#161616"/></svg>
<div class="a t" style="top:497.0px;line-height:16px;font-size:11.5px;letter-spacing:-0.827px;color:#e6e6e6;left:1627.173px;width:100px;text-align:right;">Target</div>
<div class="a" style="left:1738px;top:496px;width:145px;height:18px;background:#1d1d1d;border-radius:4px;"></div>
<svg class="a" style="left:1741px;top:497px;" width="16" height="16"><rect x="4.5" y="4.5" width="7" height="7" fill="#e6e6e6"/><g fill="none" stroke="#e6e6e6" stroke-width="1.1"><path d="M1.5,4.5 V1.5 H4.5 M11.5,1.5 H14.5 V4.5 M14.5,11.5 V14.5 H11.5 M4.5,14.5 H1.5 V11.5"/></g></svg>
<div class="a t" style="top:497.0px;line-height:16px;font-size:11.5px;letter-spacing:-0.2px;color:#e6e6e6;left:1763px;">Plane.001</div>
<svg class="a" style="left:1866px;top:499px;" width="12" height="12"><path d="M2.5,2.5 L9.5,9.5 M9.5,2.5 L2.5,9.5" stroke="#d0d0d0" stroke-width="1.1"/></svg>
<div class="a t" style="top:522.0px;line-height:16px;font-size:11.5px;letter-spacing:-0.2px;color:#e6e6e6;left:1627.8px;width:100px;text-align:right;">Main Axis</div>
<div class="a" style="left:1738px;top:521px;width:145px;height:18px;background:#545454;border-radius:4px;"></div>
<div class="a" style="left:1738px;top:521px;width:35px;height:18px;background:#4772b3;border-radius:4px 0 0 4px;"></div>
<div class="a" style="left:1772.5px;top:521px;width:1px;height:18px;background:#3d3d3d;"></div>
<div class="a" style="left:1809px;top:521px;width:1px;height:18px;background:#3d3d3d;"></div>
<div class="a" style="left:1846px;top:521px;width:1px;height:18px;background:#3d3d3d;"></div>
<div class="a t" style="top:522.0px;line-height:16px;font-size:11.5px;letter-spacing:-0.2px;color:#ffffff;left:1735.4px;width:40px;text-align:center;">Auto</div>
<div class="a t" style="top:522.0px;line-height:16px;font-size:11.5px;letter-spacing:-0.2px;color:#e6e6e6;left:1770.9px;width:40px;text-align:center;">X</div>
<div class="a t" style="top:522.0px;line-height:16px;font-size:11.5px;letter-spacing:-0.2px;color:#e6e6e6;left:1807.9px;width:40px;text-align:center;">Y</div>
<div class="a t" style="top:522.0px;line-height:16px;font-size:11.5px;letter-spacing:-0.2px;color:#e6e6e6;left:1844.9px;width:40px;text-align:center;">Z</div>
<div class="a" style="left:1892px;top:528px;width:4px;height:4px;background:#d0d0d0;border-radius:2px;"></div>
<div class="a" style="left:1738px;top:549px;width:12px;height:12px;background:#545454;border-radius:2px;border:1px solid #3d3d3d;"></div>
<div class="a t" style="top:547.0px;line-height:16px;font-size:11.5px;letter-spacing:-0.2px;color:#e6e6e6;left:1754px;">Cyclic</div>
<div class="a" style="left:1892px;top:553px;width:4px;height:4px;background:#d0d0d0;border-radius:2px;"></div>
<div class="a t" style="top:583.0px;line-height:16px;font-size:11.5px;letter-spacing:-0.2px;color:#e6e6e6;left:1627.8px;width:100px;text-align:right;">Influence</div>
<div class="a" style="left:1738px;top:582px;width:145px;height:18px;background:#4772b3;border-radius:4px;"></div>
<div class="a" style="left:1863px;top:582px;width:20px;height:18px;background:#545454;border-radius:0 4px 4px 0;"></div>
<div class="a t" style="top:583.0px;line-height:16px;font-size:11.5px;letter-spacing:-0.2px;color:#ffffff;left:1768.9px;width:60px;text-align:center;">1.000</div>
<svg class="a" style="left:1865px;top:583px;" width="16" height="16"><circle cx="8.3" cy="8" r="7" fill="#e6e6e6"/><path d="M5.4,5.1 L11.2,10.9 M11.2,5.1 L5.4,10.9" stroke="#303030" stroke-width="1.8"/></svg>
<div class="a" style="left:1892px;top:589px;width:4px;height:4px;background:#d0d0d0;border-radius:2px;"></div>
<div class="a" style="left:1590px;top:729px;width:26px;height:26px;background:#303030;border-radius:4px 0 0 4px;"></div>
<div class="a" style="left:1592px;top:571px;width:22px;height:1px;background:#262626;"></div>
<div class="a" style="left:1592px;top:812px;width:22px;height:1px;background:#262626;"></div>
<svg class="a" style="left:1595px;top:401px;" width="16" height="16"><g fill="#b8b8b8"><rect x="2.5" y="1" width="1.4" height="7"/><ellipse cx="3.2" cy="12" rx="2.2" ry="3"/><path d="M9,1 V5 A3,3 0 0 0 10.5,7.5 V15 H12.5 V7.5 A3,3 0 0 0 14,5 V1 H12.6 V4.6 H10.4 V1 Z"/></g></svg>
<svg class="a" style="left:1595px;top:437px;" width="16" height="16"><g fill="none" stroke="#b8b8b8" stroke-width="1.2"><rect x="1.5" y="5" width="13" height="9.5"/><path d="M4,5 V3 H8.5 V5"/></g><rect x="3.5" y="7.5" width="6" height="4.5" fill="#b8b8b8"/><rect x="11" y="7.5" width="2" height="1.2" fill="#b8b8b8"/><rect x="11" y="10" width="2" height="1.2" fill="#b8b8b8"/></svg>
<svg class="a" style="left:1595px;top:465.5px;" width="16" height="16"><g fill="#b8b8b8"><path d="M1.5,2 H14.5 V7.5 H12.5 V5.5 H3.5 V7.5 H1.5 Z"/><path d="M4.5,7 H11.5 V14.5 H4.5 Z M5.8,8.3 V13.2 H10.2 V8.3 Z" fill-rule="evenodd"/><path d="M6,13 L8,10.3 L10,13 Z"/></g></svg>
<svg class="a" style="left:1595px;top:493.5px;" width="16" height="16"><g fill="none" stroke="#b8b8b8" stroke-width="1.1"><path d="M1.5,4 V14.5 H12"/><path d="M3.5,2.5 V12.5 H14"/></g><path d="M5.5,1 H15 V10.5 H5.5 Z M7,2.4 V9.2 H13.6 V2.4 Z" fill="#b8b8b8" fill-rule="evenodd"/><path d="M7.5,9 L10,5 L11.7,7.4 L12.5,6.5 L13.5,9 Z" fill="#b8b8b8"/></svg>
<svg class="a" style="left:1595px;top:521.5px;" width="16" height="16"><path d="M5,2 L9,11 A4,3.2 0 0 1 1,11 Z" fill="#b8b8b8"/><circle cx="12.5" cy="4.5" r="1.9" fill="#b8b8b8"/><circle cx="11" cy="11.5" r="3" fill="none" stroke="#b8b8b8" stroke-width="1.2"/></svg>
<svg class="a" style="left:1595px;top:550px;" width="16" height="16"><circle cx="8" cy="8" r="6.2" fill="none" stroke="#c85a70" stroke-width="1.3"/><path d="M3.2,5.5 C5.5,4.5 6.5,6 8,6.3 C9.8,6.6 10,4 12,3.6 M2.5,10.5 C5,9.8 6.2,11.2 8.2,11 C10.2,10.8 11.5,9.2 14,9.6" fill="none" stroke="#c85a70" stroke-width="1.2"/></svg>
<svg class="a" style="left:1595px;top:586px;" width="16" height="16"><g fill="none" stroke="#b8b8b8" stroke-width="1.2"><rect x="1.6" y="2" width="12.8" height="3.2"/><path d="M2.6,5.2 V14 H13.4 V5.2"/><path d="M6,8.5 H10"/></g></svg>
<svg class="a" style="left:1595px;top:621.5px;" width="16" height="16"><rect x="4.5" y="4.5" width="7" height="7" fill="#e8954a"/><g fill="none" stroke="#e8954a" stroke-width="1.1"><path d="M1.5,4.5 V1.5 H4.5 M11.5,1.5 H14.5 V4.5 M14.5,11.5 V14.5 H11.5 M4.5,14.5 H1.5 V11.5"/></g></svg>
<svg class="a" style="left:1595px;top:650px;" width="16" height="16"><path d="M14.2,3.2 L11.3,6.1 L9.9,4.7 L12.8,1.8 A4,4 0 0 0 7.6,6.6 L1.6,12.6 A1.5,1.5 0 0 0 3.6,14.6 L9.6,8.4 A4,4 0 0 0 14.2,3.2 Z" fill="#6d92e6"/></svg>
<svg class="a" style="left:1595px;top:678px;" width="16" height="16"><g fill="#6d92e6" stroke="#6d92e6"><circle cx="3.5" cy="3.5" r="2" stroke="none"/><circle cx="13" cy="4.5" r="1.2" stroke="none"/><circle cx="4" cy="13.5" r="1.2" stroke="none"/><circle cx="12.5" cy="13" r="1.7" stroke="none"/><path d="M3.5,3.5 L13,4.5 M3.5,3.5 L4,13.5 M3.5,3.5 L12.5,13" stroke-width="1.1" fill="none"/></g></svg>
<svg class="a" style="left:1595px;top:706px;" width="16" height="16"><circle cx="7.5" cy="8.5" r="2.6" fill="#6d92e6"/><circle cx="13" cy="3" r="1.5" fill="#6d92e6"/><path d="M11.2,4.2 A6,6 0 1 0 13.3,7.2" fill="none" stroke="#6d92e6" stroke-width="1.2"/></svg>
<svg class="a" style="left:1595px;top:734px;" width="16" height="16"><g fill="none" stroke="#8aa8f0" stroke-width="1.2"><path d="M1.6,10 A4.4,4.4 0 0 0 9.8,12.4 L14.4,5 A2.4,2.4 0 0 0 11.4,1.6 L3.8,6.2 A4.4,4.4 0 0 0 1.6,10 Z"/><circle cx="6" cy="10" r="2.6"/><circle cx="6" cy="10" r="0.9" fill="#8aa8f0" stroke="none"/><circle cx="12" cy="3.9" r="0.8" fill="#8aa8f0" stroke="none"/></g></svg>
<svg class="a" style="left:1595px;top:762px;" width="16" height="16"><g fill="none" stroke="#2fc590" stroke-width="1.2"><path d="M3,3 H13 L8,13 Z"/><rect x="1.5" y="1.5" width="3" height="3" fill="#282828"/><rect x="11.5" y="1.5" width="3" height="3" fill="#282828"/><rect x="6.5" y="11.5" width="3" height="3" fill="#282828"/></g></svg>
<svg class="a" style="left:1595px;top:790px;" width="16" height="16"><circle cx="8" cy="8" r="6.3" fill="#d9707a"/><path d="M8,8 V1.7 A6.3,6.3 0 0 1 14.3,8 Z" fill="#1d1d1d"/><path d="M8,8 H1.7 A6.3,6.3 0 0 0 8,14.3 Z" fill="#1d1d1d" opacity="0"/></svg>
<svg class="a" style="left:1595px;top:825.5px;" width="16" height="16"><rect x="1" y="1" width="14" height="14" fill="#5a2a30"/><rect x="1.0" y="1.0" width="3.5" height="3.5" fill="#d9707a"/><rect x="1.0" y="8.0" width="3.5" height="3.5" fill="#d9707a"/><rect x="4.5" y="4.5" width="3.5" height="3.5" fill="#d9707a"/><rect x="4.5" y="11.5" width="3.5" height="3.5" fill="#d9707a"/><rect x="8.0" y="1.0" width="3.5" height="3.5" fill="#d9707a"/><rect x="8.0" y="8.0" width="3.5" height="3.5" fill="#d9707a"/><rect x="11.5" y="4.5" width="3.5" height="3.5" fill="#d9707a"/><rect x="11.5" y="11.5" width="3.5" height="3.5" fill="#d9707a"/></svg>
<div class="a" style="left:1.5px;top:946.5px;width:1583.5px;height:72.8px;background:#1d1d1d;border-radius:5px;overflow:hidden;"></div>
<div class="a" style="left:1.5px;top:946.5px;width:1583.5px;height:25.5px;background:#303030;border-radius:5px 5px 0 0;"></div>
<div class="a" style="left:58.5px;top:995px;width:1469.1px;height:24.3px;background:#2b2b2b;"></div>
<div class="a" style="left:1.5px;top:995px;width:57.0px;height:24.3px;background:#222222;border-radius:0 0 0 5px;"></div>
<div class="a" style="left:1527.6px;top:995px;width:57.40000000000009px;height:24.3px;background:#1d1d1d;border-radius:0 0 5px 0;"></div>
<svg class="a" style="left:0px;top:0px;shape-rendering:crispEdges;" width="1919" height="1041"><path d="M23.5,995 V1019" stroke="#222222"/><path d="M52.5,995 V1019" stroke="#181818"/><path d="M82.5,995 V1019" stroke="#222222"/><path d="M111.5,995 V1019" stroke="#181818"/><path d="M141.5,995 V1019" stroke="#222222"/><path d="M170.5,995 V1019" stroke="#181818"/><path d="M200.5,995 V1019" stroke="#222222"/><path d="M229.5,995 V1019" stroke="#181818"/><path d="M259.5,995 V1019" stroke="#222222"/><path d="M288.5,995 V1019" stroke="#181818"/><path d="M318.5,995 V1019" stroke="#222222"/><path d="M347.5,995 V1019" stroke="#181818"/><path d="M377.5,995 V1019" stroke="#222222"/><path d="M406.5,995 V1019" stroke="#181818"/><path d="M436.5,995 V1019" stroke="#222222"/><path d="M465.5,995 V1019" stroke="#181818"/><path d="M495.5,995 V1019" stroke="#222222"/><path d="M524.5,995 V1019" stroke="#181818"/><path d="M554.5,995 V1019" stroke="#222222"/><path d="M583.5,995 V1019" stroke="#181818"/><path d="M613.5,995 V1019" stroke="#222222"/><path d="M642.5,995 V1019" stroke="#181818"/><path d="M672.5,995 V1019" stroke="#222222"/><path d="M701.5,995 V1019" stroke="#181818"/><path d="M731.5,995 V1019" stroke="#222222"/><path d="M760.5,995 V1019" stroke="#181818"/><path d="M790.5,995 V1019" stroke="#222222"/><path d="M819.5,995 V1019" stroke="#181818"/><path d="M849.5,995 V1019" stroke="#222222"/><path d="M878.5,995 V1019" stroke="#181818"/><path d="M908.5,995 V1019" stroke="#222222"/><path d="M937.5,995 V1019" stroke="#181818"/><path d="M967.5,995 V1019" stroke="#222222"/><path d="M996.5,995 V1019" stroke="#181818"/><path d="M1026.5,995 V1019" stroke="#222222"/><path d="M1055.5,995 V1019" stroke="#181818"/><path d="M1085.5,995 V1019" stroke="#222222"/><path d="M1114.5,995 V1019" stroke="#181818"/><path d="M1144.5,995 V1019" stroke="#222222"/><path d="M1173.5,995 V1019" stroke="#181818"/><path d="M1203.5,995 V1019" stroke="#222222"/><path d="M1232.5,995 V1019" stroke="#181818"/><path d="M1262.5,995 V1019" stroke="#222222"/><path d="M1291.5,995 V1019" stroke="#181818"/><path d="M1321.5,995 V1019" stroke="#222222"/><path d="M1350.5,995 V1019" stroke="#181818"/><path d="M1380.5,995 V1019" stroke="#222222"/><path d="M1409.5,995 V1019" stroke="#181818"/><path d="M1439.5,995 V1019" stroke="#222222"/><path d="M1468.5,995 V1019" stroke="#181818"/><path d="M1498.5,995 V1019" stroke="#222222"/><path d="M1527.5,995 V1019" stroke="#181818"/><path d="M1557.5,995 V1019" stroke="#222222"/></svg>
<div class="a t" style="top:976.0px;line-height:16px;font-size:11.5px;letter-spacing:1.151px;color:#c0c0c0;left:92.1755px;width:40px;text-align:center;">10</div>
<div class="a t" style="top:976.0px;line-height:16px;font-size:11.5px;letter-spacing:1.151px;color:#c0c0c0;left:151.1755px;width:40px;text-align:center;">20</div>
<div class="a t" style="top:976.0px;line-height:16px;font-size:11.5px;letter-spacing:1.151px;color:#c0c0c0;left:210.1755px;width:40px;text-align:center;">30</div>
<div class="a t" style="top:976.0px;line-height:16px;font-size:11.5px;letter-spacing:1.151px;color:#c0c0c0;left:269.1755px;width:40px;text-align:center;">40</div>
<div class="a t" style="top:976.0px;line-height:16px;font-size:11.5px;letter-spacing:1.151px;color:#c0c0c0;left:328.1755px;width:40px;text-align:center;">50</div>
<div class="a t" style="top:976.0px;line-height:16px;font-size:11.5px;letter-spacing:1.151px;color:#c0c0c0;left:387.1755px;width:40px;text-align:center;">60</div>
<div class="a t" style="top:976.0px;line-height:16px;font-size:11.5px;letter-spacing:1.151px;color:#c0c0c0;left:446.1755px;width:40px;text-align:center;">70</div>
<div class="a t" style="top:976.0px;line-height:16px;font-size:11.5px;letter-spacing:1.151px;color:#c0c0c0;left:505.1755px;width:40px;text-align:center;">80</div>
<div class="a t" style="top:976.0px;line-height:16px;font-size:11.5px;letter-spacing:1.151px;color:#c0c0c0;left:564.1755px;width:40px;text-align:center;">90</div>
<div class="a t" style="top:976.0px;line-height:16px;font-size:11.5px;letter-spacing:0.863px;color:#c0c0c0;left:623.0315px;width:40px;text-align:center;">100</div>
<div class="a t" style="top:976.0px;line-height:16px;font-size:11.5px;letter-spacing:0.863px;color:#c0c0c0;left:682.0315px;width:40px;text-align:center;">110</div>
<div class="a t" style="top:976.0px;line-height:16px;font-size:11.5px;letter-spacing:0.863px;color:#c0c0c0;left:741.0315px;width:40px;text-align:center;">120</div>
<div class="a t" style="top:976.0px;line-height:16px;font-size:11.5px;letter-spacing:0.863px;color:#c0c0c0;left:800.0315px;width:40px;text-align:center;">130</div>
<div class="a t" style="top:976.0px;line-height:16px;font-size:11.5px;letter-spacing:0.863px;color:#c0c0c0;left:859.0315px;width:40px;text-align:center;">140</div>
<div class="a t" style="top:976.0px;line-height:16px;font-size:11.5px;letter-spacing:0.863px;color:#c0c0c0;left:918.0315px;width:40px;text-align:center;">150</div>
<div class="a t" style="top:976.0px;line-height:16px;font-size:11.5px;letter-spacing:0.863px;color:#c0c0c0;left:977.0315px;width:40px;text-align:center;">160</div>
<div class="a t" style="top:976.0px;line-height:16px;font-size:11.5px;letter-spacing:0.863px;color:#c0c0c0;left:1036.0315px;width:40px;text-align:center;">170</div>
<div class="a t" style="top:976.0px;line-height:16px;font-size:11.5px;letter-spacing:0.863px;color:#c0c0c0;left:1095.0314999999998px;width:40px;text-align:center;">180</div>
<div class="a t" style="top:976.0px;line-height:16px;font-size:11.5px;letter-spacing:0.863px;color:#c0c0c0;left:1154.0314999999998px;width:40px;text-align:center;">190</div>
<div class="a t" style="top:976.0px;line-height:16px;font-size:11.5px;letter-spacing:0.863px;color:#c0c0c0;left:1213.0314999999998px;width:40px;text-align:center;">200</div>
<div class="a t" style="top:976.0px;line-height:16px;font-size:11.5px;letter-spacing:0.863px;color:#c0c0c0;left:1272.0314999999998px;width:40px;text-align:center;">210</div>
<div class="a t" style="top:976.0px;line-height:16px;font-size:11.5px;letter-spacing:0.863px;color:#c0c0c0;left:1331.0314999999998px;width:40px;text-align:center;">220</div>
<div class="a t" style="top:976.0px;line-height:16px;font-size:11.5px;letter-spacing:0.863px;color:#c0c0c0;left:1390.0314999999998px;width:40px;text-align:center;">230</div>
<div class="a t" style="top:976.0px;line-height:16px;font-size:11.5px;letter-spacing:0.863px;color:#c0c0c0;left:1449.0314999999998px;width:40px;text-align:center;">240</div>
<div class="a t" style="top:976.0px;line-height:16px;font-size:11.5px;letter-spacing:0.863px;color:#c0c0c0;left:1508.0314999999998px;width:40px;text-align:center;">250</div>
<div class="a" style="left:8px;top:1009px;width:1569px;height:8px;background:#545454;border-radius:4px;"></div>
<div class="a" style="left:9.5px;top:1010px;width:6px;height:6px;background:#303030;border-radius:3px;"></div>
<div class="a" style="left:1569.5px;top:1010px;width:6px;height:6px;background:#303030;border-radius:3px;"></div>
<div class="a" style="left:58px;top:992px;width:1.5px;height:27.3px;background:#4772b3;"></div>
<div class="a" style="left:47px;top:975.5px;width:24px;height:16.5px;background:#4772b3;border-radius:4px;"></div>
<div class="a t" style="top:976.0px;line-height:16px;font-size:11.5px;letter-spacing:0px;color:#ffffff;left:48.7px;width:20px;text-align:center;">1</div>
<div class="a" style="left:9px;top:950.5px;width:31px;height:19px;background:#282828;border-radius:4px;border:1px solid #3d3d3d;"></div>
<svg class="a" style="left:27px;top:955px;" width="12" height="12"><path d="M3.1,4.55 L6,7.45 L8.9,4.55" fill="none" stroke="#e6e6e6" stroke-width="1.2" stroke-linecap="round" stroke-linejoin="round"/></svg>
<svg class="a" style="left:12px;top:952px;" width="16" height="16"><circle cx="8" cy="8" r="6.5" fill="#e0e0e0"/><path d="M8,8 L11.8,3.6 A5.8,5.8 0 0 1 11.8,12.4 Z" fill="#282828"/></svg>
<div class="a" style="left:46px;top:950.5px;width:127px;height:19px;background:#282828;border-radius:4px;border:1px solid #3d3d3d;"></div>
<div class="a" style="left:114px;top:950.5px;width:1px;height:19px;background:#3d3d3d;"></div>
<div class="a t" style="top:952.0px;line-height:16px;font-size:11.5px;letter-spacing:-0.2px;color:#e6e6e6;left:53px;">Playback</div>
<svg class="a" style="left:102px;top:955px;" width="12" height="12"><path d="M3.1,4.55 L6,7.45 L8.9,4.55" fill="none" stroke="#e6e6e6" stroke-width="1.2" stroke-linecap="round" stroke-linejoin="round"/></svg>
<div class="a t" style="top:952.0px;line-height:16px;font-size:11.5px;letter-spacing:-0.2px;color:#e6e6e6;left:122px;">Keying</div>
<svg class="a" style="left:160px;top:955px;" width="12" height="12"><path d="M3.1,4.55 L6,7.45 L8.9,4.55" fill="none" stroke="#e6e6e6" stroke-width="1.2" stroke-linecap="round" stroke-linejoin="round"/></svg>
<div class="a t" style="top:952.0px;line-height:16px;font-size:11.5px;letter-spacing:-0.2px;color:#e6e6e6;left:182px;">View</div>
<div class="a t" style="top:952.0px;line-height:16px;font-size:11.5px;letter-spacing:-0.2px;color:#e6e6e6;left:221px;">Marker</div>
<div class="a" style="left:701px;top:950.5px;width:38px;height:19px;background:#282828;border-radius:4px;border:1px solid #3d3d3d;"></div>
<div class="a" style="left:701px;top:950.5px;width:18px;height:19px;background:#545454;border-radius:4px 0 0 4px;"></div>
<div class="a" style="left:705.8px;top:955.8px;width:8.4px;height:8.4px;background:#e6e6e6;border-radius:4.2px;"></div>
<svg class="a" style="left:723px;top:955px;" width="12" height="12"><path d="M3.1,4.55 L6,7.45 L8.9,4.55" fill="none" stroke="#555" stroke-width="1.2" stroke-linecap="round" stroke-linejoin="round"/></svg>
<div class="a" style="left:746px;top:950.5px;width:118px;height:19px;background:#545454;border-radius:4px;"></div>
<div class="a" style="left:764px;top:950.5px;width:1px;height:19px;background:#3d3d3d;"></div>
<div class="a" style="left:784.2px;top:950.5px;width:1px;height:19px;background:#3d3d3d;"></div>
<div class="a" style="left:804.2px;top:950.5px;width:1px;height:19px;background:#3d3d3d;"></div>
<div class="a" style="left:824px;top:950.5px;width:1px;height:19px;background:#3d3d3d;"></div>
<div class="a" style="left:844px;top:950.5px;width:1px;height:19px;background:#3d3d3d;"></div>
<svg class="a" style="left:0px;top:0px;" width="1919" height="1041"><g fill="#e6e6e6">
<rect x="749.9" y="954.7" width="2.2" height="10.4"/><path d="M752.8,960 L759.3,955.8 V964.2 Z"/>
<path d="M767,960 L771.5,954.7 L776,960 L771.5,965.3 Z"/><path d="M777.2,960 L782.3,956.3 V963.7 Z"/>
<path d="M790,960 L800.1,953.9 V966.1 Z"/>
<path d="M820.2,960 L810,953.9 V966.1 Z"/>
<path d="M832.9,960 L828,956.3 V963.7 Z"/><path d="M834,960 L838.5,954.7 L843,960 L838.5,965.3 Z"/>
<path d="M857.3,960 L850.9,955.8 V964.2 Z"/><rect x="857.8" y="954.7" width="2.2" height="10.4"/>
</g></svg>
<div class="a" style="left:1308px;top:950.6px;width:74px;height:18.8px;background:#545454;border-radius:4px;"></div>
<div class="a t" style="top:952.0px;line-height:16px;font-size:11.5px;letter-spacing:-0.2px;color:#e6e6e6;left:1328.9px;width:30px;text-align:center;">1</div>
<div class="a" style="left:1387px;top:950.6px;width:191.6px;height:18.8px;background:#545454;border-radius:4px;"></div>
<div class="a" style="left:1406px;top:950.6px;width:1px;height:18.8px;background:#3d3d3d;"></div>
<div class="a" style="left:1494.5px;top:950.6px;width:1px;height:18.8px;background:#3d3d3d;"></div>
<svg class="a" style="left:1389px;top:952px;" width="16" height="16"><g fill="none" stroke="#e6e6e6" stroke-width="1.1"><circle cx="7.5" cy="9" r="5"/><path d="M7.5,6 V9 H10"/><path d="M5.5,2 H9.5 M7.5,2 V4 M12,4 L13.5,2.8"/></g></svg>
<div class="a t" style="top:952.0px;line-height:16px;font-size:11.5px;letter-spacing:-0.2px;color:#e6e6e6;left:1422px;">Start</div>
<div class="a t" style="top:952.0px;line-height:16px;font-size:11.5px;letter-spacing:-0.2px;color:#e6e6e6;left:1440.8px;width:40px;text-align:right;">1</div>
<div class="a t" style="top:952.0px;line-height:16px;font-size:11.5px;letter-spacing:-0.2px;color:#e6e6e6;left:1510px;">End</div>
<div class="a t" style="top:952.0px;line-height:16px;font-size:11.5px;letter-spacing:0.863px;color:#e6e6e6;left:1526.363px;width:40px;text-align:right;">250</div>
<div class="a" style="left:1580.7px;top:982px;width:2.6px;height:27px;background:#333333;border-radius:1.3px;"></div>
<svg class="a" style="left:1577px;top:988px;" width="8" height="10"><path d="M6,1.5 L2,5 L6,8.5" fill="none" stroke="#777" stroke-width="1"/></svg>
<svg class="a" style="left:1px;top:988px;" width="8" height="10"><path d="M2,1.5 L6,5 L2,8.5" fill="none" stroke="#999" stroke-width="1"/></svg>
<div class="a" style="left:0px;top:1020px;width:1919px;height:19px;background:#1d1d1d;"></div>
<svg class="a" style="left:10px;top:1022px;" width="12" height="16"><rect x="1.5" y="1.5" width="9" height="13" rx="3.5" fill="none" stroke="#c8c8c8" stroke-width="1.1"/><path d="M1.5,7 V5 A3.5,3.5 0 0 1 5,1.5 H6 V7 Z" fill="#c8c8c8"/></svg>
<div class="a t" style="top:1022.0px;line-height:16px;font-size:11.5px;letter-spacing:-0.2px;color:#b8b8b8;left:34px;">Select</div>
<svg class="a" style="left:222px;top:1022px;" width="12" height="16"><rect x="1.5" y="1.5" width="9" height="13" rx="3.5" fill="none" stroke="#c8c8c8" stroke-width="1.1"/><rect x="4.8" y="3" width="2.4" height="5" rx="1" fill="#c8c8c8"/></svg>
<div class="a t" style="top:1022.0px;line-height:16px;font-size:11.5px;letter-spacing:-0.2px;color:#b8b8b8;left:245px;">Rotate View</div>
<svg class="a" style="left:433px;top:1022px;" width="12" height="16"><rect x="1.5" y="1.5" width="9" height="13" rx="3.5" fill="none" stroke="#c8c8c8" stroke-width="1.1"/><path d="M10.5,7 V5 A3.5,3.5 0 0 0 7,1.5 H6 V7 Z" fill="#c8c8c8"/></svg>
<div class="a t" style="top:1022.0px;line-height:16px;font-size:11.5px;letter-spacing:-0.2px;color:#b8b8b8;left:456px;">Object Context Menu</div>
<div class="a t" style="top:1022.0px;line-height:16px;font-size:11.5px;letter-spacing:-0.2px;color:#a0a0a0;left:1851.8px;width:60px;text-align:right;">3.4.1</div>
<div class="a" style="left:0px;top:1039px;width:1919px;height:2px;background:#1b2733;"></div>
<div class="a" style="left:48px;top:1039px;width:344px;height:2px;background:#f4f4f4;"></div>
<div class="a" style="left:1032px;top:1039px;width:48px;height:2px;background:#5a6670;"></div>
<svg class="a" style="left:12px;top:54px;" width="18" height="16"><circle cx="12.6" cy="4.4" r="3.6" fill="#e6e6e6"/><circle cx="11.5" cy="3.2" r="1.2" fill="#888"/><g stroke="#e6e6e6" stroke-width="1.1" fill="none"><path d="M5.5,8.6 H14 M2,11.5 H16 M6,6.5 L3.8,14.4 M11.5,8.5 L13.4,14.4"/></g></svg>
<svg class="a" style="left:50px;top:54px;" width="17" height="16"><rect x="4.2" y="4.4" width="7.8" height="7.6" fill="#e6e6e6"/><g fill="none" stroke="#e6e6e6" stroke-width="1.1"><path d="M1,4 V1 H4 M12,1 H15.2 V4 M15.2,12 V14.8 H12 M4,14.8 H1 V12"/></g></svg>
<svg class="a" style="left:668px;top:54px;" width="20" height="16"><g fill="none" stroke="#e6e6e6" stroke-width="1.1" stroke-linecap="round" stroke-linejoin="round"><path d="M6.5,11 V1.8 M4.3,4 L6.5,1.6 L8.7,4"/><path d="M8,12.7 H17.3 M15.2,10.5 L17.5,12.7 L15.2,14.9"/><path d="M7.5,11.5 L14.5,4.8 M11.8,4.5 H14.8 V7.5"/><circle cx="6.5" cy="12.7" r="1.5"/></g></svg>
<svg class="a" style="left:756px;top:54px;" width="16" height="16"><g fill="none" stroke="#e6e6e6" stroke-width="1.2"><circle cx="10.3" cy="6" r="4"/><circle cx="5.6" cy="10.8" r="4"/></g><circle cx="8.3" cy="7.2" r="1.2" fill="#e6e6e6"/></svg>
<svg class="a" style="left:791px;top:54px;" width="16" height="16"><path d="M3.2,4.8 L8,2 A5.2,5.2 0 0 1 13.2,10.4 L9.6,13.6 L7.4,11.2 L10.6,8.2 A2,2 0 0 0 8.6,5.2 L4.6,7.6 Z" fill="none" stroke="#a8a8a8" stroke-width="1.1" stroke-linejoin="round"/></svg>
<svg class="a" style="left:811px;top:54px;" width="16" height="16"><rect x="11" y="1.2" width="4" height="4" fill="#e6e6e6"/><g stroke="#e6e6e6" stroke-width="1.1" fill="none"><path d="M1.2,10.3 H14.5 M1.5,7 V13.8 M14.3,6.5 V13.8 M5.6,8.5 V12 M9.9,8.5 V12"/></g></svg>
<svg class="a" style="left:848px;top:54px;" width="16" height="16"><circle cx="8" cy="8" r="5.8" fill="none" stroke="#909090" stroke-width="1"/><circle cx="8" cy="8" r="1.9" fill="#d8d8d8"/></svg>
<svg class="a" style="left:868px;top:54px;" width="17" height="16"><path d="M1.5,13.2 C5.5,13.2 5.5,2.6 8.5,2.6 C11.5,2.6 11.5,13.2 15.5,13.2" fill="none" stroke="#a0a0a0" stroke-width="1.1"/></svg>
<svg class="a" style="left:1332px;top:54px;" width="17" height="16"><path d="M4.5,5 C6.5,1.3 13.5,1.3 15.5,5 C13.5,8.7 6.5,8.7 4.5,5 Z" fill="#e6e6e6"/><circle cx="10" cy="4.6" r="2.3" fill="#282828"/><circle cx="10" cy="4.6" r="1.2" fill="#e6e6e6"/><path d="M1.5,7.5 L9,10.8 L5.8,11.8 L4.6,15 Z" fill="#e6e6e6"/></svg>
<svg class="a" style="left:1368px;top:54px;" width="16" height="16"><g fill="none" stroke="#ffffff" stroke-width="1.1" stroke-linecap="round" stroke-linejoin="round"><path d="M1.2,4.2 C7.5,4.2 12.6,8.6 13.2,15"/><path d="M5.4,11 L14.4,2.2 M10.4,1.8 H14.8 V6.2"/><circle cx="4.2" cy="12.4" r="1.7"/></g></svg>
<svg class="a" style="left:1413px;top:54px;" width="16" height="16"><circle cx="10" cy="6" r="4.8" fill="#ffffff"/><circle cx="6.6" cy="10" r="4.6" fill="none" stroke="#ffffff" stroke-width="1.2"/><path d="M6.6,5.4 A4.6,4.6 0 0 1 11.2,10" fill="none" stroke="#4772b3" stroke-width="1.2"/><circle cx="8.6" cy="7.8" r="0.9" fill="#4772b3"/></svg>
<svg class="a" style="left:1458px;top:54px;" width="16" height="16"><g fill="none" stroke="#e6e6e6" stroke-width="1.2"><path d="M5,4.6 V2 H14.6 V11.2 H12"/><rect x="2" y="4.6" width="10" height="10"/></g><rect x="5" y="7.6" width="1.3" height="1.3" fill="#e6e6e6"/><path d="M5,11.2 H9" stroke="#e6e6e6" stroke-width="1.1"/></svg>
<svg class="a" style="left:1483px;top:54px;" width="17" height="16"><g fill="none" stroke="#d8d8d8" stroke-width="1.1"><circle cx="8.5" cy="8" r="6.2"/><ellipse cx="8.5" cy="8" rx="2.8" ry="6.2"/><path d="M2.6,6 H14.4 M2.6,10 H14.4"/></g></svg>
<svg class="a" style="left:1502px;top:54px;" width="16" height="16"><circle cx="8" cy="8" r="6.6" fill="#ffffff"/></svg>
<svg class="a" style="left:1521px;top:54px;" width="16" height="16"><circle cx="8" cy="8" r="6.2" fill="none" stroke="#d0d0d0" stroke-width="1.1"/><path d="M8,8 L8,1.8 A6.2,6.2 0 0 0 1.8,8 A6.2,6.2 0 0 0 12.4,12.4 Z" fill="#c8c8c8"/><path d="M8,8 L12.4,12.4 A6.2,6.2 0 0 0 14.2,8 Z" fill="#888" opacity="0.6"/></svg>
<svg class="a" style="left:1540px;top:54px;" width="16" height="16"><circle cx="8" cy="8" r="6.2" fill="none" stroke="#d0d0d0" stroke-width="1.1"/><path d="M4,7.5 A4.2,4.2 0 0 1 8,3.8" fill="none" stroke="#d8d8d8" stroke-width="1.2"/><path d="M5,12.6 A6,6 0 0 0 13.4,10" fill="none" stroke="#aaa" stroke-width="1.6" stroke-dasharray="1,1"/></svg>
<svg class="a" style="left:47px;top:82px;" width="15" height="15"><rect x="0.8" y="0.8" width="12.8" height="12.8" fill="none" stroke="#ffffff" stroke-width="1.5" stroke-dasharray="2.4,1.87"/></svg>
<svg class="a" style="left:65.5px;top:82px;" width="15" height="15"><rect x="4.8" y="0.2" width="9.6" height="9.6" fill="#dcdcdc"/><rect x="0.3" y="4.7" width="9.8" height="9.6" fill="#dcdcdc"/></svg>
<svg class="a" style="left:84.5px;top:82px;" width="15" height="15"><path d="M5.2,0.2 H14.3 V9.8 H10.2 V4.7 H5.2 Z" fill="#dcdcdc"/><rect x="1" y="5.6" width="8.4" height="8.2" fill="none" stroke="#dcdcdc" stroke-width="1.3" stroke-dasharray="2,1.6"/></svg>
<svg class="a" style="left:103.5px;top:82px;" width="15" height="15"><path d="M4.8,0.2 H14.4 V9.8 H10 V14.3 H0.3 V4.7 H4.8 Z M4.8,4.7 V9.8 H10 V4.7 Z" fill="#dcdcdc" fill-rule="evenodd"/></svg>
<svg class="a" style="left:122.5px;top:82px;" width="15" height="15"><rect x="0.9" y="0.9" width="12.8" height="12.8" fill="none" stroke="#dcdcdc" stroke-width="1.3" stroke-dasharray="2.4,1.87"/><rect x="4.2" y="4" width="6.2" height="6.2" fill="#dcdcdc"/></svg>
<svg class="a" style="left:16px;top:114.3px;" width="24" height="24"><rect x="1.2" y="1.2" width="21.6" height="21.6" rx="1" fill="none" stroke="#deb060" stroke-width="1.4" stroke-dasharray="3.6,2.2"/><path d="M8.8,6.2 L16.8,13 L12.4,13.6 L10.2,17.4 Z" fill="#e4e8f0"/></svg>
<svg class="a" style="left:43.5px;top:137.8px;" width="4" height="4"><path d="M4,0 V4 H0 Z" fill="#9ab0d8"/></svg>
<svg class="a" style="left:16px;top:149.10000000000002px;" width="24" height="24"><circle cx="12" cy="12" r="11" fill="none" stroke="#ececec" stroke-width="1.7"/><circle cx="12" cy="12" r="11" fill="none" stroke="#8a2c3a" stroke-width="1.7" stroke-dasharray="3.2,5.44" stroke-dashoffset="1.6"/><path d="M12,4.8 V10 M12,14 V19.2 M4.8,12 H10 M14,12 H19.2" stroke="#909090" stroke-width="1.6"/></svg>
<svg class="a" style="left:16px;top:188.60000000000002px;" width="24" height="24"><g fill="#e0e0e0" transform="translate(12,12) scale(1.14) translate(-12,-12)"><path d="M12,1.5 L15,6 H9 Z M12,22.5 L9,18 H15 Z M1.5,12 L6,9 V15 Z M22.5,12 L18,15 V9 Z"/><rect x="11.2" y="6" width="1.6" height="3"/><rect x="11.2" y="15" width="1.6" height="3"/><rect x="6" y="11.2" width="3" height="1.6"/><rect x="15" y="11.2" width="3" height="1.6"/></g></svg>
<svg class="a" style="left:16px;top:223.60000000000002px;" width="24" height="24"><g transform="translate(12,12) scale(1.1) translate(-12,-12)"><g fill="none" stroke="#e0e0e0" stroke-width="1.4"><path d="M4.5,8 A9,9 0 0 1 19.5,8"/><path d="M19.5,16.5 A9,9 0 0 1 4.5,16.5"/></g><path d="M12,8.2 L15.8,12 L12,15.8 L8.2,12 Z" fill="#c8c8c8"/><path d="M0.6,10.8 H7 L3.8,15.8 Z M17,13.4 H23.4 L20.2,8.4 Z" fill="#e0e0e0"/></g></svg>
<svg class="a" style="left:16px;top:258.8px;" width="24" height="24"><path d="M4.5,3.5 H20.5 V19.5 H13" fill="none" stroke="#b8b8b8" stroke-width="1.3"/><rect x="3.5" y="11" width="9.5" height="9.5" fill="#e0e0e0"/><path d="M11.5,12.5 L17.5,6.5" stroke="#e0e0e0" stroke-width="1.3"/><path d="M14,6 H18 V10 Z" fill="#e0e0e0"/></svg>
<svg class="a" style="left:43px;top:282.5px;" width="4" height="4"><path d="M4,0 V4 H0 Z" fill="#888"/></svg>
<svg class="a" style="left:16px;top:293.3px;" width="24" height="24"><circle cx="12" cy="12" r="9.6" fill="none" stroke="#d8d8d8" stroke-width="1.3" stroke-dasharray="8.4,6.68" stroke-dashoffset="-3.34"/><rect x="7.8" y="7.8" width="8.4" height="8.4" fill="#e4e4e4"/><path d="M12,0.6 L15,5 H9 Z M12,23.4 L9,19 H15 Z M0.6,12 L5,9 V15 Z M23.4,12 L19,15 V9 Z" fill="#e0e0e0"/></svg>
<svg class="a" style="left:16px;top:334.8px;" width="24" height="24"><path d="M0.8,18.2 C4,22.5 8,22 11,18.5 C14,15 18,12.5 21,15 C23,16.5 24,18 25,19.6" fill="none" stroke="#7fd6a8" stroke-width="1.4"/><path d="M0.8,17.6 L2.35,12.8 L15.6,-0.4 L18.8,2.8 L5.6,16.05 Z" fill="#e4e4e4"/><path d="M13.3,1.84 L16.56,5.09" stroke="#2b2b2b" stroke-width="1.1"/><path d="M0.8,17.6 L1.4,15.6 L2.9,17 Z" fill="#2b2b2b"/></svg>
<svg class="a" style="left:43px;top:358.5px;" width="4" height="4"><path d="M4,0 V4 H0 Z" fill="#888"/></svg>
<svg class="a" style="left:16px;top:369.3px;" width="24" height="24"><g transform="translate(2.5,0) scale(1.09,1) translate(-2.5,0)"><path d="M2.5,0.5 H7 V19 H22 V23.5 H2.5 Z" fill="#dcdcdc"/><path d="M7,8 A11,11 0 0 1 18,19 H7 Z" fill="#8fdcb4"/><path d="M7,6.2 A12.8,12.8 0 0 1 19.8,19" fill="none" stroke="#8fdcb4" stroke-width="1"/><g stroke="#2b2b2b" stroke-width="0.9"><path d="M4.6,3 H7 M4.6,5.5 H7 M4.6,8 H7 M4.6,10.5 H7 M4.6,13 H7 M4.6,15.5 H7 M9.5,21 V23.5 M12,21 V23.5 M14.5,21 V23.5 M17,21 V23.5 M19.5,21 V23.5"/></g></g></svg>
<svg class="a" style="left:16px;top:409.1px;" width="24" height="24"><g fill="none" stroke="#8fdcb4" stroke-width="1.3" stroke-linejoin="round"><path d="M6,9.5 H17.5 V22.5 H6 Z"/><path d="M6,9.5 L10.5,5 H22.5 L17.5,9.5 M22.5,5 V17.5 L17.5,22.5"/></g><path d="M3.5,-0.5 V7 M-0.2,3.2 H7.2" stroke="#8fdcb4" stroke-width="2"/></svg>
<svg class="a" style="left:43px;top:433px;" width="4" height="4"><path d="M4,0 V4 H0 Z" fill="#888"/></svg>
<svg class="a" style="left:1331px;top:193px;" width="26" height="26"><circle cx="15" cy="10.5" r="5.2" fill="none" stroke="#ffffff" stroke-width="1.8"/><path d="M11,14.5 L5.5,20" stroke="#ffffff" stroke-width="2.6" stroke-linecap="round"/><path d="M15,8 V13 M12.5,10.5 H17.5" stroke="#ffffff" stroke-width="1.2"/></svg>
<svg class="a" style="left:1331px;top:223px;" width="26" height="26"><g stroke="#ffffff" stroke-width="2.3" stroke-linecap="round" fill="none"><path d="M8.2,12.5 L7.2,8.2 M11.4,11.5 L10.8,5.6 M14.6,11.5 L15,5.4 M17.6,12.4 L18.8,7.4"/></g><path d="M7.2,11.5 L18.6,11.5 L18.2,15 L20.8,12.6 A1.2,1.2 0 0 1 22.6,14 L18.6,19 C17.4,20.4 15.8,21 14,21 C10.5,21 8.4,19 7.8,16 Z" fill="#ffffff"/></svg>
<svg class="a" style="left:1331px;top:253px;" width="26" height="26"><circle cx="9.2" cy="9" r="3.1" fill="#ffffff"/><circle cx="15.8" cy="8.4" r="3.7" fill="#ffffff"/><path d="M6.2,12.6 H17 V14.6 L21,12.8 V19.8 L17,18 V20.4 H9.4 V17.6 H6.2 Z" fill="#ffffff"/><circle cx="9.2" cy="9" r="1" fill="#777"/><circle cx="15.8" cy="8.4" r="1.3" fill="#777"/></svg>
<svg class="a" style="left:1331px;top:283px;" width="26" height="26"><g fill="none" stroke="#ffffff" stroke-width="1.5"><rect x="5.5" y="5.5" width="15" height="15"/><path d="M10.5,5.5 V20.5 M15.5,5.5 V20.5 M5.5,10.5 H20.5 M5.5,15.5 H20.5"/></g></svg>
<svg class="a" style="left:1526px;top:28px;" width="16" height="16"><path d="M5.2,1.8 L8.6,10 A3.6,3 0 0 1 1.6,10 Z" fill="#e6e6e6"/><circle cx="12.6" cy="3.8" r="1.8" fill="#e6e6e6"/><circle cx="11" cy="11" r="3.1" fill="none" stroke="#e6e6e6" stroke-width="1.2"/><path d="M9.6,10 A1.6,1.6 0 0 1 11,9.2" stroke="#e6e6e6" stroke-width="0.8" fill="none"/></svg>
<svg class="a" style="left:1542.5px;top:31px;" width="12" height="12"><path d="M3.1,4.55 L6,7.45 L8.9,4.55" fill="none" stroke="#e6e6e6" stroke-width="1.2" stroke-linecap="round" stroke-linejoin="round"/></svg>
<svg class="a" style="left:1655px;top:28px;" width="16" height="16"><g fill="none" stroke="#8c8c8c" stroke-width="1.1" stroke-linejoin="round"><path d="M9.4,1.6 L14.4,6.6 L12.8,7 L10.2,9.6 L10,12.4 L3.6,6 L6.4,5.8 L9,3.2 Z"/><path d="M6.6,9.4 L1.6,14.4"/></g></svg>
<svg class="a" style="left:1676.5px;top:28.5px;" width="16" height="16"><g fill="none" stroke="#d8d8d8" stroke-width="1.1" stroke-linejoin="round"><path d="M5,1 H11 L14.8,4.8 V11.4 H5 Z"/><path d="M10.8,1.2 V5 H14.6"/><path d="M5,4.4 H1.2 V14.8 H9.4 V11.4"/></g></svg>
<svg class="a" style="left:1697px;top:28.5px;" width="16" height="16"><path d="M4.4,4.4 L11.6,11.6 M11.6,4.4 L4.4,11.6" stroke="#6a6a6a" stroke-width="1.1"/></svg>
<svg class="a" style="left:1724.5px;top:28px;" width="16" height="16"><g fill="none" stroke="#e0e0e0" stroke-width="1.1"><path d="M1.5,4.5 V14.5 H11.5"/><path d="M3.5,2.8 V12.5 H13.5"/></g><path d="M5.5,0.8 H15.2 V10.6 H5.5 Z M6.9,2.2 V9.2 H13.8 V2.2 Z" fill="#e0e0e0" fill-rule="evenodd"/><path d="M7.2,9 L9.8,4.6 L11.6,7.2 L12.5,6.2 L13.6,9 Z" fill="#e0e0e0"/><circle cx="12.3" cy="3.8" r="0.8" fill="#e0e0e0"/></svg>
<svg class="a" style="left:1739.5px;top:31px;" width="12" height="12"><path d="M3.1,4.55 L6,7.45 L8.9,4.55" fill="none" stroke="#e6e6e6" stroke-width="1.2" stroke-linecap="round" stroke-linejoin="round"/></svg>
<svg class="a" style="left:1873.5px;top:28.5px;" width="16" height="16"><g fill="none" stroke="#d8d8d8" stroke-width="1.1" stroke-linejoin="round"><path d="M5,1 H11 L14.8,4.8 V11.4 H5 Z"/><path d="M10.8,1.2 V5 H14.6"/><path d="M5,4.4 H1.2 V14.8 H9.4 V11.4"/></g></svg>
<svg class="a" style="left:1894px;top:28.5px;" width="16" height="16"><path d="M4.4,4.4 L11.6,11.6 M11.6,4.4 L4.4,11.6" stroke="#6a6a6a" stroke-width="1.1"/></svg>
<svg class="a" style="left:1600px;top:54px;" width="16" height="16"><g fill="#e6e6e6"><rect x="1.5" y="1.2" width="4.6" height="2.6"/><rect x="7.6" y="6.6" width="7" height="2.6"/><rect x="7.6" y="11.6" width="7" height="2.6"/></g><path d="M3.6,4.2 V13 H7 M3.6,8 H7" fill="none" stroke="#e6e6e6" stroke-width="1.1"/></svg>
<svg class="a" style="left:1637.5px;top:54px;" width="16" height="16"><g fill="none" stroke="#e0e0e0" stroke-width="1.1"><path d="M1.5,4.5 V14.5 H11.5"/><path d="M3.5,2.8 V12.5 H13.5"/></g><path d="M5.5,0.8 H15.2 V10.6 H5.5 Z M6.9,2.2 V9.2 H13.8 V2.2 Z" fill="#e0e0e0" fill-rule="evenodd"/><path d="M7.2,9 L9.8,4.6 L11.6,7.2 L12.5,6.2 L13.6,9 Z" fill="#e0e0e0"/><circle cx="12.3" cy="3.8" r="0.8" fill="#e0e0e0"/></svg>
<svg class="a" style="left:1858px;top:54px;" width="16" height="16"><path d="M1.5,1.8 H14.5 L9.6,8 V14.6 L6.4,12.6 V8 Z" fill="none" stroke="#e6e6e6" stroke-width="1.2" stroke-linejoin="round"/></svg>
<svg class="a" style="left:1894px;top:54px;" width="16" height="16"><g fill="none" stroke="#e6e6e6" stroke-width="1.1"><path d="M8.5,4.6 H1.6 V7.6 H12.4 V7"/><path d="M2.6,7.6 V14.4 H11.4 V7.6"/><path d="M5.5,10.4 H8.5"/></g><circle cx="12" cy="4" r="3.6" fill="#e6e6e6"/><path d="M12,1.8 V6.2 M9.8,4 H14.2" stroke="#545454" stroke-width="1.1"/></svg>
</div></body></html>
